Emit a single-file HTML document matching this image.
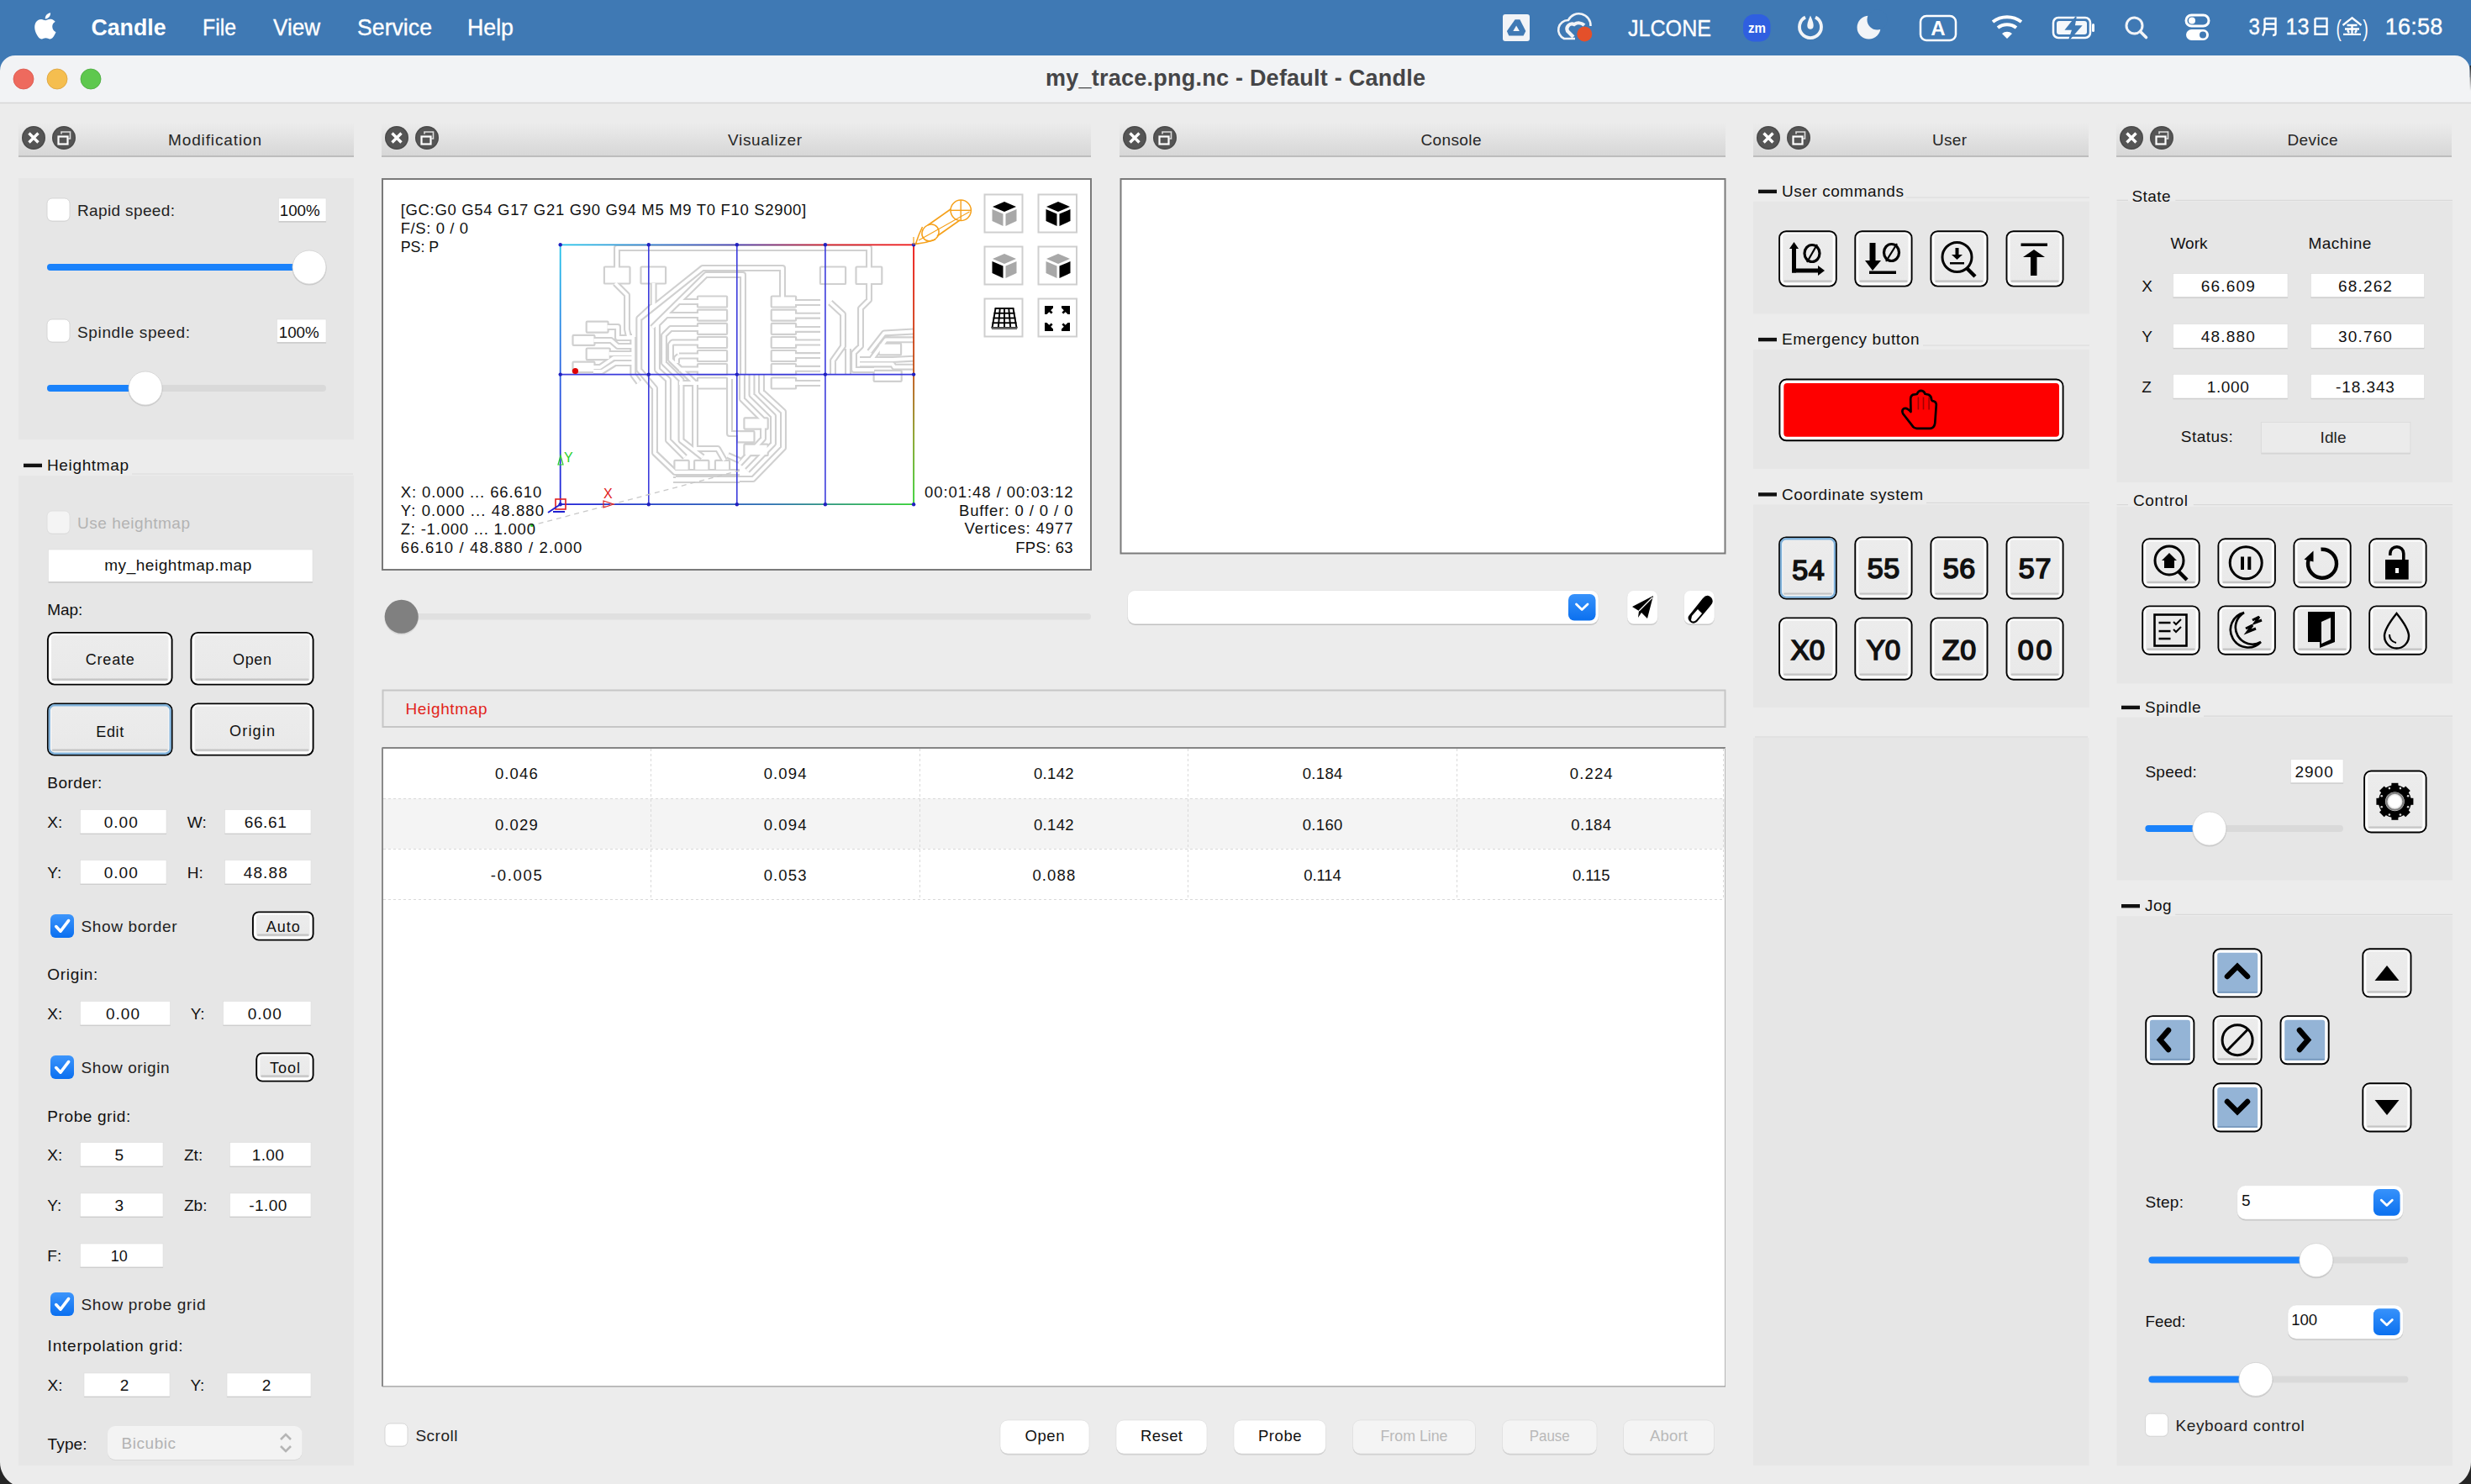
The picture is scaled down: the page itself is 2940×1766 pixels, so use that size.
<!DOCTYPE html>
<html><head><meta charset="utf-8"><title>Candle</title>
<style>
html,body{margin:0;padding:0;width:2940px;height:1766px;overflow:hidden;background:#ececec;}
svg{display:block;font-family:"Liberation Sans", sans-serif;}
</style></head><body>
<svg width="2940" height="1766" viewBox="0 0 2940 1766">
<defs>
<linearGradient id="edge" x1="0" y1="0" x2="0" y2="1"><stop offset="0" stop-color="#222"/><stop offset="1" stop-color="#f2f3f5"/></linearGradient>
<linearGradient id="hdr" x1="0" y1="0" x2="0" y2="1"><stop offset="0" stop-color="#ececec"/><stop offset="1" stop-color="#d6d6d6"/></linearGradient>
<linearGradient id="btn" x1="0" y1="0" x2="0" y2="1"><stop offset="0" stop-color="#ececec"/><stop offset="1" stop-color="#e9e9e9"/></linearGradient>
<linearGradient id="chk" x1="0" y1="0" x2="0" y2="1"><stop offset="0" stop-color="#3d95fb"/><stop offset="1" stop-color="#0a6ff0"/></linearGradient>
<linearGradient id="blue" x1="0" y1="0" x2="0" y2="1"><stop offset="0" stop-color="#3792fb"/><stop offset="1" stop-color="#0b70ef"/></linearGradient>
<linearGradient id="gtop" gradientUnits="userSpaceOnUse" x1="666" y1="0" x2="1087" y2="0"><stop offset="0" stop-color="#22c6ea"/><stop offset="0.5" stop-color="#4a3fb0"/><stop offset="0.75" stop-color="#d0202a"/><stop offset="1" stop-color="#ee1010"/></linearGradient>
<linearGradient id="gleft" gradientUnits="userSpaceOnUse" x1="0" y1="291" x2="0" y2="600"><stop offset="0" stop-color="#22c6ea"/><stop offset="0.5" stop-color="#2a60e0"/><stop offset="1" stop-color="#2020d8"/></linearGradient>
<linearGradient id="gright" gradientUnits="userSpaceOnUse" x1="0" y1="291" x2="0" y2="600"><stop offset="0" stop-color="#ee1010"/><stop offset="0.5" stop-color="#c05010"/><stop offset="0.75" stop-color="#80a020"/><stop offset="1" stop-color="#30d030"/></linearGradient>
<linearGradient id="gbot" gradientUnits="userSpaceOnUse" x1="666" y1="0" x2="1087" y2="0"><stop offset="0" stop-color="#2020d8"/><stop offset="0.6" stop-color="#2a70b0"/><stop offset="1" stop-color="#30d030"/></linearGradient>
</defs>
<rect x="0" y="0" width="2940" height="1766" fill="#ececec" stroke="none" stroke-width="0" rx="0" />
<path d="M0 1740 A30 30 0 0 0 15 1766 L0 1766 Z" fill="#262626" stroke="none" stroke-width="0" />
<rect x="0" y="0" width="2940" height="92" fill="#3f79b4" stroke="none" stroke-width="0" rx="0" />
<path d="M53.5 22.5c1.6-2 2.7-4.6 2.4-7.3-2.3.1-5.1 1.6-6.7 3.5-1.5 1.7-2.8 4.4-2.4 7 2.6.2 5.2-1.3 6.7-3.2zM55.8 26.2c-3.7-.2-6.9 2.1-8.6 2.1-1.8 0-4.5-2-7.4-1.9-3.8.1-7.3 2.2-9.3 5.6-4 6.9-1 17.1 2.9 22.7 1.9 2.8 4.1 5.8 7.1 5.7 2.8-.1 3.9-1.8 7.3-1.8s4.4 1.8 7.4 1.8c3.1-.1 5-2.8 6.9-5.6 2.2-3.2 3.1-6.3 3.1-6.5-.1 0-6-2.3-6.1-9.1 0-5.7 4.7-8.4 4.9-8.6-2.7-3.9-6.8-4.4-8.2-4.4z" fill="#fff" stroke="none" stroke-width="0" transform="translate(21.5,4.7) scale(0.69)"/>
<text x="108.5" y="42.2" font-size="28" fill="#fff" font-weight="bold" text-anchor="start" textLength="89" lengthAdjust="spacingAndGlyphs" >Candle</text>
<text x="241" y="42.2" font-size="28" fill="#fff" font-weight="normal" text-anchor="start" textLength="40" lengthAdjust="spacingAndGlyphs" stroke="#fff" stroke-width="0.35">File</text>
<text x="325" y="42.2" font-size="28" fill="#fff" font-weight="normal" text-anchor="start" textLength="56" lengthAdjust="spacingAndGlyphs" stroke="#fff" stroke-width="0.35">View</text>
<text x="425" y="42.2" font-size="28" fill="#fff" font-weight="normal" text-anchor="start" textLength="89" lengthAdjust="spacingAndGlyphs" stroke="#fff" stroke-width="0.35">Service</text>
<text x="556" y="42.2" font-size="28" fill="#fff" font-weight="normal" text-anchor="start" textLength="55" lengthAdjust="spacingAndGlyphs" stroke="#fff" stroke-width="0.35">Help</text>
<rect x="1788" y="17" width="32" height="32" fill="#f2f4f7" stroke="none" stroke-width="0" rx="3" />
<path d="M1802.6 23.2 L1808.4 23.2 L1815.3 37.1 L1812.6 42.6 L1795.3 42.6 L1792.9 37.1 Z" fill="#3f79b4" stroke="none" stroke-width="0" stroke="#3f79b4" stroke-width="1.6" stroke-linejoin="round"/>
<path d="M1800.3 37.1 L1804.1 30.5 L1807.9 37.1 Z" fill="#f2f4f7" stroke="none" stroke-width="0" />
<path d="M1874 46 L1861 46 A11.5 11.5 0 0 1 1866 24 A14 14 0 0 1 1892.5 31" fill="none" stroke="#f2f4f7" stroke-width="2.6" />
<path d="M1872 44 L1865 37 A6 6 0 0 1 1873 29 A10 10 0 0 1 1885 30" fill="none" stroke="#f2f4f7" stroke-width="4.2" />
<circle cx="1885.3" cy="40.5" r="9" fill="#e4502a" stroke="none" stroke-width="0" />
<text x="1937" y="43" font-size="28" fill="#fff" font-weight="normal" text-anchor="start" textLength="99" lengthAdjust="spacingAndGlyphs" stroke="#fff" stroke-width="0.35">JLCONE</text>
<rect x="2074" y="17" width="32.5" height="32.5" fill="#2f5fe0" stroke="none" stroke-width="0" rx="13" />
<text x="2090.5" y="38.5" font-size="17" fill="#fff" font-weight="bold" text-anchor="middle" textLength="21" lengthAdjust="spacingAndGlyphs" >zm</text>
<path d="M2148 20.5 A13 13 0 1 0 2160 20.5" fill="none" stroke="#f2f4f7" stroke-width="3.8" />
<path d="M2154 18.5 Q2158.5 28 2157.5 32 A3.6 3.6 0 0 1 2150.5 32 Q2149.5 28 2154 18.5 Z" fill="#f2f4f7" stroke="none" stroke-width="0" />
<circle cx="2223.5" cy="32.7" r="13.9" fill="#f2f4f7" stroke="none" stroke-width="0" />
<circle cx="2233.5" cy="23.5" r="12" fill="#3f79b4" stroke="none" stroke-width="0" />
<rect x="2285" y="19" width="42" height="29" fill="none" stroke="#fff" stroke-width="2.5" rx="7" />
<text x="2306" y="42" font-size="24" fill="#fff" font-weight="bold" text-anchor="middle" >A</text>
<path d="M2371 26 a28 28 0 0 1 34 0" fill="none" stroke="#fff" stroke-width="4" />
<path d="M2377 33 a18 18 0 0 1 22 0" fill="none" stroke="#fff" stroke-width="4" />
<path d="M2382 40 L2388 46 L2394 40 a9 9 0 0 0 -12 0 Z" fill="#fff" stroke="none" stroke-width="0" />
<rect x="2443" y="21" width="44" height="24" fill="none" stroke="#fff" stroke-width="2.5" rx="6" />
<rect x="2489" y="28" width="3" height="10" fill="#fff" stroke="none" stroke-width="0" rx="1.5" />
<rect x="2447" y="25" width="36" height="16" fill="#fff" stroke="none" stroke-width="0" rx="3" opacity="0.95"/>
<path d="M2470 20 L2458 35 L2466 35 L2462 47 L2476 31 L2468 31 Z" fill="#3f79b4" stroke="#3f79b4" stroke-width="1.5" />
<circle cx="2539.5" cy="30.5" r="9.5" fill="none" stroke="#f2f4f7" stroke-width="3" />
<line x1="2546.5" y1="37.5" x2="2553.5" y2="44.5" stroke="#f2f4f7" stroke-width="3.6" stroke-linecap="round"/>
<rect x="2601" y="18" width="27" height="13" fill="none" stroke="#fff" stroke-width="3" rx="6.5" />
<circle cx="2608" cy="24.5" r="4" fill="#fff" stroke="none" stroke-width="0" />
<rect x="2601" y="35" width="27" height="13" fill="#fff" stroke="none" stroke-width="0" rx="6.5" />
<circle cx="2621" cy="41.5" r="4" fill="#3f79b4" stroke="none" stroke-width="0" />
<text x="2675.5" y="41.2" font-size="27" fill="#fff" font-weight="normal" text-anchor="start" textLength="13.4" lengthAdjust="spacingAndGlyphs" stroke="#fff" stroke-width="0.35">3</text>
<path d="M2694.5 22 L2694.5 34 Q2694.5 39 2692 42.5 M2694.5 22 L2707.5 22 L2707.5 40 Q2707.5 42 2704 42 M2694.5 28.5 L2707.5 28.5 M2694.5 34.5 L2707.5 34.5" fill="none" stroke="#fff" stroke-width="2.4" />
<text x="2719.4" y="41.2" font-size="27" fill="#fff" font-weight="normal" text-anchor="start" textLength="28" lengthAdjust="spacingAndGlyphs" stroke="#fff" stroke-width="0.35">13</text>
<path d="M2754.5 22 L2768.5 22 L2768.5 42 M2754.5 22 L2754.5 42 M2754.5 31.5 L2768.5 31.5 M2754.5 40.8 L2768.5 40.8" fill="none" stroke="#fff" stroke-width="2.4" />
<text x="2779.5" y="43" font-size="27" fill="#fff" font-weight="normal" text-anchor="start" textLength="6.2" lengthAdjust="spacingAndGlyphs" >(</text>
<path d="M2787.5 30.0 L2798.5 21.3 L2809.5 30.0 M2792.5 30.0 L2804.5 30.0 M2790 34.5 L2807 34.5 M2798.5 30.0 L2798.5 40.5 M2788 40.8 L2809 40.8 M2793 36.0 L2795 39.0 M2804 36.0 L2802 39.0" fill="none" stroke="#fff" stroke-width="2.3" />
<text x="2811.2" y="43" font-size="27" fill="#fff" font-weight="normal" text-anchor="start" textLength="6.5" lengthAdjust="spacingAndGlyphs" >)</text>
<text x="2837.8" y="41.2" font-size="27" fill="#fff" font-weight="normal" text-anchor="start" textLength="68.4" lengthAdjust="spacing" stroke="#fff" stroke-width="0.35">16:58</text>
<path d="M0 84 A18 18 0 0 1 18 66 L2920.7 66 A18 18 0 0 1 2938.7 84 L2938.7 92 L2940 92 L2940 122 L0 122 Z" fill="#f2f3f5" stroke="none" stroke-width="0" />
<rect x="2938.6" y="78" width="1.4" height="30" fill="url(#edge)"/>
<line x1="0" y1="122.5" x2="2940" y2="122.5" stroke="#d6d6d6" stroke-width="1.5" />
<circle cx="28" cy="94" r="12" fill="#ee6a5e" stroke="#d9574c" stroke-width="0.8" />
<circle cx="68" cy="94" r="12" fill="#f5be4f" stroke="#d9a13c" stroke-width="0.8" />
<circle cx="108" cy="94" r="12" fill="#5ec84e" stroke="#4aa83d" stroke-width="0.8" />
<text x="1470" y="102" font-size="27" fill="#454547" font-weight="bold" text-anchor="middle" textLength="452" lengthAdjust="spacing" >my_trace.png.nc - Default - Candle</text>
<rect x="22" y="146" width="399" height="41" fill="url(#hdr)"/>
<rect x="22" y="185" width="399" height="2" fill="#bdbdbd" stroke="none" stroke-width="0" rx="0" />
<circle cx="40" cy="164" r="14" fill="#4a4a4a" stroke="none" stroke-width="0" />
<circle cx="40" cy="164" r="12.5" fill="#555" stroke="none" stroke-width="0" />
<path d="M34.5 158.5 L45.5 169.5 M45.5 158.5 L34.5 169.5" fill="none" stroke="#fff" stroke-width="3.4" />
<circle cx="76" cy="164" r="14" fill="#4a4a4a" stroke="none" stroke-width="0" />
<circle cx="76" cy="164" r="12.5" fill="#555" stroke="none" stroke-width="0" />
<rect x="69.5" y="162.5" width="11" height="9" fill="none" stroke="#fff" stroke-width="2.2" rx="0" />
<path d="M73 159.5 L73 157 L83.5 157 L83.5 165 L81 165" fill="none" stroke="#ddd" stroke-width="1.6" />
<text x="255.5" y="173.3" font-size="19" fill="#262626" font-weight="normal" text-anchor="middle" textLength="111" lengthAdjust="spacing" >Modification</text>
<rect x="454" y="146" width="844" height="41" fill="url(#hdr)"/>
<rect x="454" y="185" width="844" height="2" fill="#bdbdbd" stroke="none" stroke-width="0" rx="0" />
<circle cx="472" cy="164" r="14" fill="#4a4a4a" stroke="none" stroke-width="0" />
<circle cx="472" cy="164" r="12.5" fill="#555" stroke="none" stroke-width="0" />
<path d="M466.5 158.5 L477.5 169.5 M477.5 158.5 L466.5 169.5" fill="none" stroke="#fff" stroke-width="3.4" />
<circle cx="508" cy="164" r="14" fill="#4a4a4a" stroke="none" stroke-width="0" />
<circle cx="508" cy="164" r="12.5" fill="#555" stroke="none" stroke-width="0" />
<rect x="501.5" y="162.5" width="11" height="9" fill="none" stroke="#fff" stroke-width="2.2" rx="0" />
<path d="M505 159.5 L505 157 L515.5 157 L515.5 165 L513 165" fill="none" stroke="#ddd" stroke-width="1.6" />
<text x="910.0" y="173.3" font-size="19" fill="#262626" font-weight="normal" text-anchor="middle" textLength="88" lengthAdjust="spacing" >Visualizer</text>
<rect x="1332" y="146" width="721" height="41" fill="url(#hdr)"/>
<rect x="1332" y="185" width="721" height="2" fill="#bdbdbd" stroke="none" stroke-width="0" rx="0" />
<circle cx="1350" cy="164" r="14" fill="#4a4a4a" stroke="none" stroke-width="0" />
<circle cx="1350" cy="164" r="12.5" fill="#555" stroke="none" stroke-width="0" />
<path d="M1344.5 158.5 L1355.5 169.5 M1355.5 158.5 L1344.5 169.5" fill="none" stroke="#fff" stroke-width="3.4" />
<circle cx="1386" cy="164" r="14" fill="#4a4a4a" stroke="none" stroke-width="0" />
<circle cx="1386" cy="164" r="12.5" fill="#555" stroke="none" stroke-width="0" />
<rect x="1379.5" y="162.5" width="11" height="9" fill="none" stroke="#fff" stroke-width="2.2" rx="0" />
<path d="M1383 159.5 L1383 157 L1393.5 157 L1393.5 165 L1391 165" fill="none" stroke="#ddd" stroke-width="1.6" />
<text x="1726.5" y="173.3" font-size="19" fill="#262626" font-weight="normal" text-anchor="middle" textLength="72" lengthAdjust="spacing" >Console</text>
<rect x="2086" y="146" width="399" height="41" fill="url(#hdr)"/>
<rect x="2086" y="185" width="399" height="2" fill="#bdbdbd" stroke="none" stroke-width="0" rx="0" />
<circle cx="2104" cy="164" r="14" fill="#4a4a4a" stroke="none" stroke-width="0" />
<circle cx="2104" cy="164" r="12.5" fill="#555" stroke="none" stroke-width="0" />
<path d="M2098.5 158.5 L2109.5 169.5 M2109.5 158.5 L2098.5 169.5" fill="none" stroke="#fff" stroke-width="3.4" />
<circle cx="2140" cy="164" r="14" fill="#4a4a4a" stroke="none" stroke-width="0" />
<circle cx="2140" cy="164" r="12.5" fill="#555" stroke="none" stroke-width="0" />
<rect x="2133.5" y="162.5" width="11" height="9" fill="none" stroke="#fff" stroke-width="2.2" rx="0" />
<path d="M2137 159.5 L2137 157 L2147.5 157 L2147.5 165 L2145 165" fill="none" stroke="#ddd" stroke-width="1.6" />
<text x="2319.5" y="173.3" font-size="19" fill="#262626" font-weight="normal" text-anchor="middle" textLength="41" lengthAdjust="spacing" >User</text>
<rect x="2518" y="146" width="399" height="41" fill="url(#hdr)"/>
<rect x="2518" y="185" width="399" height="2" fill="#bdbdbd" stroke="none" stroke-width="0" rx="0" />
<circle cx="2536" cy="164" r="14" fill="#4a4a4a" stroke="none" stroke-width="0" />
<circle cx="2536" cy="164" r="12.5" fill="#555" stroke="none" stroke-width="0" />
<path d="M2530.5 158.5 L2541.5 169.5 M2541.5 158.5 L2530.5 169.5" fill="none" stroke="#fff" stroke-width="3.4" />
<circle cx="2572" cy="164" r="14" fill="#4a4a4a" stroke="none" stroke-width="0" />
<circle cx="2572" cy="164" r="12.5" fill="#555" stroke="none" stroke-width="0" />
<rect x="2565.5" y="162.5" width="11" height="9" fill="none" stroke="#fff" stroke-width="2.2" rx="0" />
<path d="M2569 159.5 L2569 157 L2579.5 157 L2579.5 165 L2577 165" fill="none" stroke="#ddd" stroke-width="1.6" />
<text x="2751.5" y="173.3" font-size="19" fill="#262626" font-weight="normal" text-anchor="middle" textLength="60" lengthAdjust="spacing" >Device</text>
<rect x="22" y="212" width="399" height="311" fill="#e6e6e6" stroke="none" stroke-width="0" rx="0" />
<rect x="56" y="236.8" width="27" height="27" fill="#d0d0d0" stroke="none" stroke-width="0" rx="6" opacity="0.5"/>
<rect x="56" y="236" width="27" height="27" fill="#ffffff" stroke="#cfcfcf" stroke-width="0.8" rx="6" />
<text x="92" y="257" font-size="19" fill="#222" font-weight="normal" text-anchor="start" textLength="116" lengthAdjust="spacing" >Rapid speed:</text>
<rect x="331.5" y="262.5" width="56.5" height="2" fill="#b8b8b8" stroke="none" stroke-width="0" rx="0" />
<rect x="331.5" y="236" width="56.5" height="27.2" fill="#fff" stroke="none" stroke-width="0" rx="0" />
<rect x="331.5" y="236" width="56.5" height="28" fill="none" stroke="#dcdcdc" stroke-width="0.6" rx="0" />
<text x="356.75" y="257" font-size="19" fill="#111" font-weight="normal" text-anchor="middle" textLength="48" lengthAdjust="spacingAndGlyphs" >100%</text>
<rect x="56" y="314.0" width="332" height="8" fill="#d9d9d9" stroke="none" stroke-width="0" rx="4.0" />
<rect x="56" y="314.0" width="312" height="8" fill="#1a82fb" stroke="none" stroke-width="0" rx="4.0" />
<circle cx="368" cy="319" r="20.6" fill="#000" stroke="none" stroke-width="0" opacity="0.12"/>
<circle cx="368" cy="318" r="20" fill="#fff" stroke="#d2d2d2" stroke-width="0.8" />
<rect x="56" y="380.8" width="27" height="27" fill="#d0d0d0" stroke="none" stroke-width="0" rx="6" opacity="0.5"/>
<rect x="56" y="380" width="27" height="27" fill="#ffffff" stroke="#cfcfcf" stroke-width="0.8" rx="6" />
<text x="92" y="401.5" font-size="19" fill="#222" font-weight="normal" text-anchor="start" textLength="134" lengthAdjust="spacing" >Spindle speed:</text>
<rect x="329.5" y="406.5" width="58.5" height="2" fill="#b8b8b8" stroke="none" stroke-width="0" rx="0" />
<rect x="329.5" y="380" width="58.5" height="27.2" fill="#fff" stroke="none" stroke-width="0" rx="0" />
<rect x="329.5" y="380" width="58.5" height="28" fill="none" stroke="#dcdcdc" stroke-width="0.6" rx="0" />
<text x="355.75" y="401.5" font-size="19" fill="#111" font-weight="normal" text-anchor="middle" textLength="48" lengthAdjust="spacingAndGlyphs" >100%</text>
<rect x="56" y="458.0" width="332" height="8" fill="#d9d9d9" stroke="none" stroke-width="0" rx="4.0" />
<rect x="56" y="458.0" width="117" height="8" fill="#1a82fb" stroke="none" stroke-width="0" rx="4.0" />
<circle cx="173" cy="463" r="20.6" fill="#000" stroke="none" stroke-width="0" opacity="0.12"/>
<circle cx="173" cy="462" r="20" fill="#fff" stroke="#d2d2d2" stroke-width="0.8" />
<rect x="22" y="566" width="399" height="1178" fill="#e6e6e6" stroke="none" stroke-width="0" rx="0" />
<rect x="28" y="551.7" width="22" height="4.4" fill="#111" stroke="none" stroke-width="0" rx="0" />
<text x="56" y="560" font-size="19" fill="#111" font-weight="normal" text-anchor="start" textLength="97" lengthAdjust="spacing" >Heightmap</text>
<line x1="157" y1="564" x2="420" y2="564" stroke="#d9d9d9" stroke-width="1.2" />
<rect x="56" y="608.8" width="27" height="27" fill="#d0d0d0" stroke="none" stroke-width="0" rx="6" opacity="0.5"/>
<rect x="56" y="608" width="27" height="27" fill="#f4f4f4" stroke="#dddddd" stroke-width="0.8" rx="6" />
<text x="92" y="628.5" font-size="19" fill="#b3b3b3" font-weight="normal" text-anchor="start" textLength="134" lengthAdjust="spacing" >Use heightmap</text>
<rect x="57.5" y="691.5" width="314.5" height="2" fill="#b8b8b8" stroke="none" stroke-width="0" rx="0" />
<rect x="57.5" y="654" width="314.5" height="38.2" fill="#fff" stroke="none" stroke-width="0" rx="0" />
<rect x="57.5" y="654" width="314.5" height="39" fill="none" stroke="#dcdcdc" stroke-width="0.6" rx="0" />
<text x="211.75" y="679" font-size="19" fill="#111" font-weight="normal" text-anchor="middle" textLength="175" lengthAdjust="spacing" >my_heightmap.map</text>
<text x="56.3" y="732.3" font-size="19" fill="#111" font-weight="normal" text-anchor="start" textLength="42" lengthAdjust="spacing" >Map:</text>
<rect x="56.9" y="752.9" width="147.7" height="61.7" fill="#ffffff" stroke="#000" stroke-width="1.9" rx="8" />
<rect x="61" y="756" width="139.5" height="54.5" rx="3" fill="url(#btn)"/>
<rect x="62" y="807.5" width="137.5" height="2.2" fill="#c4c4c4" stroke="none" stroke-width="0" rx="1" />
<text x="130.75" y="790.8" font-size="18" fill="#111" font-weight="normal" text-anchor="middle" textLength="58" lengthAdjust="spacing" >Create</text>
<rect x="227.4" y="752.9" width="145.2" height="61.7" fill="#ffffff" stroke="#000" stroke-width="1.9" rx="8" />
<rect x="231.5" y="756" width="137.0" height="54.5" rx="3" fill="url(#btn)"/>
<rect x="232.5" y="807.5" width="135.0" height="2.2" fill="#c4c4c4" stroke="none" stroke-width="0" rx="1" />
<text x="300.0" y="791" font-size="18" fill="#111" font-weight="normal" text-anchor="middle" textLength="46" lengthAdjust="spacing" >Open</text>
<rect x="56.9" y="837.4" width="147.7" height="61.2" fill="#ffffff" stroke="#000" stroke-width="1.9" rx="8" />
<rect x="61" y="840.5" width="139.5" height="54.0" rx="3" fill="url(#btn)"/>
<rect x="62" y="891.5" width="137.5" height="2.2" fill="#c4c4c4" stroke="none" stroke-width="0" rx="1" />
<rect x="58.8" y="839.3" width="143.9" height="57.4" fill="none" stroke="#7fb0d8" stroke-width="2.4" rx="6" />
<text x="130.75" y="876.7" font-size="18" fill="#111" font-weight="normal" text-anchor="middle" textLength="33" lengthAdjust="spacing" >Edit</text>
<rect x="227.4" y="837.4" width="145.2" height="61.2" fill="#ffffff" stroke="#000" stroke-width="1.9" rx="8" />
<rect x="231.5" y="840.5" width="137.0" height="54.0" rx="3" fill="url(#btn)"/>
<rect x="232.5" y="891.5" width="135.0" height="2.2" fill="#c4c4c4" stroke="none" stroke-width="0" rx="1" />
<text x="300.0" y="876" font-size="18" fill="#111" font-weight="normal" text-anchor="middle" textLength="54" lengthAdjust="spacing" >Origin</text>
<text x="56.3" y="938.4" font-size="19" fill="#111" font-weight="normal" text-anchor="start" textLength="65" lengthAdjust="spacing" >Border:</text>
<text x="56.3" y="985" font-size="19" fill="#111" font-weight="normal" text-anchor="start" >X:</text>
<rect x="95.5" y="991.0" width="102.5" height="2" fill="#b8b8b8" stroke="none" stroke-width="0" rx="0" />
<rect x="95.5" y="963.5" width="102.5" height="28.2" fill="#fff" stroke="none" stroke-width="0" rx="0" />
<rect x="95.5" y="963.5" width="102.5" height="29.0" fill="none" stroke="#dcdcdc" stroke-width="0.6" rx="0" />
<text x="143.75" y="985" font-size="19" fill="#111" font-weight="normal" text-anchor="middle" textLength="40" lengthAdjust="spacing" >0.00</text>
<text x="222.8" y="985" font-size="19" fill="#111" font-weight="normal" text-anchor="start" >W:</text>
<rect x="267.5" y="991.0" width="102.5" height="2" fill="#b8b8b8" stroke="none" stroke-width="0" rx="0" />
<rect x="267.5" y="963.5" width="102.5" height="28.2" fill="#fff" stroke="none" stroke-width="0" rx="0" />
<rect x="267.5" y="963.5" width="102.5" height="29.0" fill="none" stroke="#dcdcdc" stroke-width="0.6" rx="0" />
<text x="315.75" y="985" font-size="19" fill="#111" font-weight="normal" text-anchor="middle" textLength="50" lengthAdjust="spacing" >66.61</text>
<text x="56.3" y="1045.2" font-size="19" fill="#111" font-weight="normal" text-anchor="start" >Y:</text>
<rect x="95.5" y="1051.0" width="102.5" height="2" fill="#b8b8b8" stroke="none" stroke-width="0" rx="0" />
<rect x="95.5" y="1023.5" width="102.5" height="28.2" fill="#fff" stroke="none" stroke-width="0" rx="0" />
<rect x="95.5" y="1023.5" width="102.5" height="29.0" fill="none" stroke="#dcdcdc" stroke-width="0.6" rx="0" />
<text x="143.75" y="1045.2" font-size="19" fill="#111" font-weight="normal" text-anchor="middle" textLength="40" lengthAdjust="spacing" >0.00</text>
<text x="222.8" y="1045.2" font-size="19" fill="#111" font-weight="normal" text-anchor="start" >H:</text>
<rect x="267.5" y="1051.0" width="102.5" height="2" fill="#b8b8b8" stroke="none" stroke-width="0" rx="0" />
<rect x="267.5" y="1023.5" width="102.5" height="28.2" fill="#fff" stroke="none" stroke-width="0" rx="0" />
<rect x="267.5" y="1023.5" width="102.5" height="29.0" fill="none" stroke="#dcdcdc" stroke-width="0.6" rx="0" />
<text x="315.75" y="1045.2" font-size="19" fill="#111" font-weight="normal" text-anchor="middle" textLength="52" lengthAdjust="spacing" >48.88</text>
<rect x="60" y="1088" width="28" height="28" rx="6" fill="url(#chk)"/>
<path d="M66.72 1102.56 L72.03999999999999 1108.16 L81.56 1095.56" fill="none" stroke="#fff" stroke-width="3.6" stroke-linecap="round" stroke-linejoin="round"/>
<text x="96.5" y="1109.2" font-size="19" fill="#222" font-weight="normal" text-anchor="start" textLength="114" lengthAdjust="spacing" >Show border</text>
<rect x="300.9" y="1085.4" width="71.7" height="33.2" fill="#ffffff" stroke="#000" stroke-width="1.9" rx="7" />
<rect x="305" y="1088.5" width="63.5" height="26.0" rx="3" fill="url(#btn)"/>
<rect x="306" y="1111.5" width="61.5" height="2.2" fill="#c4c4c4" stroke="none" stroke-width="0" rx="1" />
<text x="336.75" y="1108.7" font-size="18" fill="#111" font-weight="normal" text-anchor="middle" textLength="40" lengthAdjust="spacing" >Auto</text>
<text x="56.3" y="1166.4" font-size="19" fill="#111" font-weight="normal" text-anchor="start" textLength="60" lengthAdjust="spacing" >Origin:</text>
<text x="56.3" y="1212.5" font-size="19" fill="#111" font-weight="normal" text-anchor="start" >X:</text>
<rect x="95.5" y="1219.0" width="107.0" height="2" fill="#b8b8b8" stroke="none" stroke-width="0" rx="0" />
<rect x="95.5" y="1191.5" width="107.0" height="28.2" fill="#fff" stroke="none" stroke-width="0" rx="0" />
<rect x="95.5" y="1191.5" width="107.0" height="29.0" fill="none" stroke="#dcdcdc" stroke-width="0.6" rx="0" />
<text x="146.0" y="1212.5" font-size="19" fill="#111" font-weight="normal" text-anchor="middle" textLength="40" lengthAdjust="spacing" >0.00</text>
<text x="226.7" y="1212.5" font-size="19" fill="#111" font-weight="normal" text-anchor="start" >Y:</text>
<rect x="265.5" y="1219.0" width="104.5" height="2" fill="#b8b8b8" stroke="none" stroke-width="0" rx="0" />
<rect x="265.5" y="1191.5" width="104.5" height="28.2" fill="#fff" stroke="none" stroke-width="0" rx="0" />
<rect x="265.5" y="1191.5" width="104.5" height="29.0" fill="none" stroke="#dcdcdc" stroke-width="0.6" rx="0" />
<text x="314.75" y="1212.5" font-size="19" fill="#111" font-weight="normal" text-anchor="middle" textLength="40" lengthAdjust="spacing" >0.00</text>
<rect x="60" y="1256" width="28" height="28" rx="6" fill="url(#chk)"/>
<path d="M66.72 1270.56 L72.03999999999999 1276.16 L81.56 1263.56" fill="none" stroke="#fff" stroke-width="3.6" stroke-linecap="round" stroke-linejoin="round"/>
<text x="96.5" y="1277" font-size="19" fill="#222" font-weight="normal" text-anchor="start" textLength="105" lengthAdjust="spacing" >Show origin</text>
<rect x="305.2" y="1253.4" width="67.39999999999999" height="33.2" fill="#ffffff" stroke="#000" stroke-width="1.9" rx="7" />
<rect x="309.3" y="1256.5" width="59.19999999999999" height="26.0" rx="3" fill="url(#btn)"/>
<rect x="310.3" y="1279.5" width="57.19999999999999" height="2.2" fill="#c4c4c4" stroke="none" stroke-width="0" rx="1" />
<text x="338.9" y="1277" font-size="18" fill="#111" font-weight="normal" text-anchor="middle" textLength="36" lengthAdjust="spacing" >Tool</text>
<text x="56.3" y="1334.5" font-size="19" fill="#111" font-weight="normal" text-anchor="start" textLength="99" lengthAdjust="spacing" >Probe grid:</text>
<text x="56.3" y="1381" font-size="19" fill="#111" font-weight="normal" text-anchor="start" >X:</text>
<rect x="95.5" y="1387.0" width="98.5" height="2" fill="#b8b8b8" stroke="none" stroke-width="0" rx="0" />
<rect x="95.5" y="1359.5" width="98.5" height="28.2" fill="#fff" stroke="none" stroke-width="0" rx="0" />
<rect x="95.5" y="1359.5" width="98.5" height="29.0" fill="none" stroke="#dcdcdc" stroke-width="0.6" rx="0" />
<text x="141.75" y="1381" font-size="19" fill="#111" font-weight="normal" text-anchor="middle" >5</text>
<text x="219" y="1381" font-size="19" fill="#111" font-weight="normal" text-anchor="start" >Zt:</text>
<rect x="273.5" y="1387.0" width="96.5" height="2" fill="#b8b8b8" stroke="none" stroke-width="0" rx="0" />
<rect x="273.5" y="1359.5" width="96.5" height="28.2" fill="#fff" stroke="none" stroke-width="0" rx="0" />
<rect x="273.5" y="1359.5" width="96.5" height="29.0" fill="none" stroke="#dcdcdc" stroke-width="0.6" rx="0" />
<text x="318.75" y="1381" font-size="19" fill="#111" font-weight="normal" text-anchor="middle" textLength="38" lengthAdjust="spacing" >1.00</text>
<text x="56.3" y="1441" font-size="19" fill="#111" font-weight="normal" text-anchor="start" >Y:</text>
<rect x="95.5" y="1447.0" width="98.5" height="2" fill="#b8b8b8" stroke="none" stroke-width="0" rx="0" />
<rect x="95.5" y="1420" width="98.5" height="27.7" fill="#fff" stroke="none" stroke-width="0" rx="0" />
<rect x="95.5" y="1420" width="98.5" height="28.5" fill="none" stroke="#dcdcdc" stroke-width="0.6" rx="0" />
<text x="141.75" y="1441" font-size="19" fill="#111" font-weight="normal" text-anchor="middle" >3</text>
<text x="219" y="1441" font-size="19" fill="#111" font-weight="normal" text-anchor="start" >Zb:</text>
<rect x="273.5" y="1447.0" width="96.5" height="2" fill="#b8b8b8" stroke="none" stroke-width="0" rx="0" />
<rect x="273.5" y="1420" width="96.5" height="27.7" fill="#fff" stroke="none" stroke-width="0" rx="0" />
<rect x="273.5" y="1420" width="96.5" height="28.5" fill="none" stroke="#dcdcdc" stroke-width="0.6" rx="0" />
<text x="318.75" y="1441" font-size="19" fill="#111" font-weight="normal" text-anchor="middle" textLength="45" lengthAdjust="spacing" >-1.00</text>
<text x="56.3" y="1501" font-size="19" fill="#111" font-weight="normal" text-anchor="start" >F:</text>
<rect x="95.5" y="1507.0" width="98.5" height="2" fill="#b8b8b8" stroke="none" stroke-width="0" rx="0" />
<rect x="95.5" y="1480" width="98.5" height="27.7" fill="#fff" stroke="none" stroke-width="0" rx="0" />
<rect x="95.5" y="1480" width="98.5" height="28.5" fill="none" stroke="#dcdcdc" stroke-width="0.6" rx="0" />
<text x="141.75" y="1501" font-size="19" fill="#111" font-weight="normal" text-anchor="middle" textLength="20" lengthAdjust="spacingAndGlyphs" >10</text>
<rect x="60" y="1538" width="28" height="28" rx="6" fill="url(#chk)"/>
<path d="M66.72 1552.56 L72.03999999999999 1558.16 L81.56 1545.56" fill="none" stroke="#fff" stroke-width="3.6" stroke-linecap="round" stroke-linejoin="round"/>
<text x="96.5" y="1559.1" font-size="19" fill="#222" font-weight="normal" text-anchor="start" textLength="148" lengthAdjust="spacing" >Show probe grid</text>
<text x="56.6" y="1608" font-size="19" fill="#111" font-weight="normal" text-anchor="start" textLength="161" lengthAdjust="spacing" >Interpolation grid:</text>
<text x="56.6" y="1654.6" font-size="19" fill="#111" font-weight="normal" text-anchor="start" >X:</text>
<rect x="100" y="1661.0" width="102" height="2" fill="#b8b8b8" stroke="none" stroke-width="0" rx="0" />
<rect x="100" y="1634" width="102" height="27.7" fill="#fff" stroke="none" stroke-width="0" rx="0" />
<rect x="100" y="1634" width="102" height="28.5" fill="none" stroke="#dcdcdc" stroke-width="0.6" rx="0" />
<text x="148.0" y="1654.6" font-size="19" fill="#111" font-weight="normal" text-anchor="middle" >2</text>
<text x="226.5" y="1654.6" font-size="19" fill="#111" font-weight="normal" text-anchor="start" >Y:</text>
<rect x="270" y="1661.0" width="100" height="2" fill="#b8b8b8" stroke="none" stroke-width="0" rx="0" />
<rect x="270" y="1634" width="100" height="27.7" fill="#fff" stroke="none" stroke-width="0" rx="0" />
<rect x="270" y="1634" width="100" height="28.5" fill="none" stroke="#dcdcdc" stroke-width="0.6" rx="0" />
<text x="317.0" y="1654.6" font-size="19" fill="#111" font-weight="normal" text-anchor="middle" >2</text>
<text x="56.6" y="1724.6" font-size="19" fill="#111" font-weight="normal" text-anchor="start" textLength="47" lengthAdjust="spacing" >Type:</text>
<rect x="128" y="1698" width="231.5" height="40" fill="#cfcfcf" stroke="none" stroke-width="0" rx="9" opacity="0.6"/>
<rect x="128" y="1697" width="231.5" height="40" fill="#f3f3f3" stroke="none" stroke-width="0" rx="9" />
<text x="144.6" y="1723.8" font-size="19" fill="#b2b2b2" font-weight="normal" text-anchor="start" textLength="64.5" lengthAdjust="spacing" >Bicubic</text>
<path d="M334 1713 L340 1707 L346 1713 M334 1721 L340 1727 L346 1721" fill="none" stroke="#b5b5b5" stroke-width="2.6" />
<rect x="455" y="213" width="843" height="465" fill="#fff" stroke="#7a7a7a" stroke-width="2" rx="0" />
<g fill="none" stroke-linejoin="round">
<path d="M734.0 319.0 L734.0 295.0 L1034.0 295.0 L1034.0 319.0 M732.0 337.0 L746.0 351.0 L746.0 392.0 L748.0 401.0 L752.0 401.0 M777.6 337.0 L777.6 363.0 L760.3 379.0 L760.3 440.0 L779.0 462.0 L779.0 539.0 L803.0 562.0 L880.0 562.0 M762.0 378.0 L836.0 319.0 L931.0 319.0 L931.0 357.0 M776.0 390.0 L840.0 327.0 L884.0 327.0 L884.0 446.0 M808.0 375.0 L793.0 375.0 L782.0 386.0 L782.0 440.0 L795.0 452.0 L795.0 524.0 L815.0 544.0 M808.0 391.0 L798.0 391.0 L790.0 399.0 L790.0 432.0 L810.5 452.0 L810.5 524.0 L836.0 544.0 M808.0 407.5 L800.0 407.5 L798.0 410.0 L798.0 428.0 L827.0 456.0 L827.0 534.0 L854.0 534.0 L862.0 548.0 M808.0 423.5 L805.0 426.0 L805.0 432.0 M987.8 360.0 L1003.0 374.0 L1003.0 412.0 L991.0 429.0 L991.0 446.0 M1034.0 337.0 L1034.0 357.0 L1024.0 367.0 L1024.0 412.0 L1016.0 420.0 L1016.0 440.0 L1040.0 440.0 M1009.0 415.0 L1009.0 446.0 M1034.6 418.8 L1052.0 396.4 L1087.0 394.5 M1037.0 427.3 L1054.0 404.3 L1087.0 404.3 M1023.0 428.0 L1062.0 428.0 L1087.0 426.7 M1023.0 433.4 L1062.0 433.4 L1064.0 436.7 L1087.0 436.7 M722.5 389.0 L735.0 389.0 L735.0 402.0 L752.0 402.0 M706.4 405.0 L727.0 405.0 L735.0 412.0 L752.0 412.0 M724.7 421.0 L752.0 421.0 M706.0 437.0 L714.0 437.0 L730.0 426.0 L752.0 426.0 M706.0 442.0 L716.0 442.0 L732.0 432.0 L752.0 432.0 M753.3 401.0 L753.3 446.0 L760.0 455.0 M906.0 446.0 L906.0 466.0 L932.0 490.0 L932.0 533.0 L896.0 570.0 L804.0 570.0 M894.5 446.0 L894.5 470.0 L920.0 495.0 L920.0 528.0 L889.0 560.0 M883.0 446.0 L883.0 475.0 L908.0 500.0 L908.0 522.0 L880.0 552.0 M868.0 451.0 L868.0 516.0 L880.0 516.0 M944.0 360.0 L976.0 360.0 M944.0 375.7 L976.0 375.7 M944.0 391.9 L976.0 391.9 M944.0 407.5 L976.0 407.5 M944.0 423.1 L976.0 423.1 M944.0 438.8 L976.0 438.8 M944.0 456.0 L976.0 456.0 M808.0 359.0 L831.0 359.0 M808.0 375.0 L831.0 375.0 M808.0 391.0 L831.0 391.0 M808.0 407.5 L831.0 407.5 M808.0 423.5 L831.0 423.5 M808.0 439.5 L831.0 439.5 M808.0 456.0 L831.0 456.0 M801.0 571.0 L880.0 571.0 M866.0 542.0 L880.0 548.0" fill="none" stroke="#d0d0d0" stroke-width="8" />
<path d="M720 318.6 H748.4 V336.4 H720 Z M763.6 318.6 H791 V336.4 H763.6 Z M977 318.6 H1005 V336.9 H977 Z M1019.6 318.6 H1048.2 V336.9 H1019.6 Z M698.8 383.8 H722.5 V394.6 H698.8 Z M682.6 400 H706.4 V409.7 H682.6 Z M698.8 415.6 H724.7 V427 H698.8 Z M682.6 431.8 H706.4 V442 H682.6 Z M1046.7 409.7 H1071 V421.2 H1046.7 Z M1040.7 441.9 H1071.6 V452.8 H1040.7 Z M886.5 498.5 H912.6 V509.6 H886.5 Z M878 514.2 H896.4 V525.3 H878 Z M886.5 529.8 H912.6 V541 H886.5 Z M803.5 549 H818.6 V558.7 H803.5 Z M827.2 549 H842.3 V558.7 H827.2 Z M852 549 H867 V558.7 H852 Z M831 353.6 H864 V364.4 H831 Z M918.8 353.6 H946 V364.4 H918.8 Z M831 369.8 H864 V380.59999999999997 H831 Z M918.8 369.8 H946 V380.59999999999997 H918.8 Z M831 385.90000000000003 H864 V396.7 H831 Z M918.8 385.90000000000003 H946 V396.7 H918.8 Z M831 402.1 H864 V412.9 H831 Z M918.8 402.1 H946 V412.9 H918.8 Z M831 418.1 H864 V428.9 H831 Z M918.8 418.1 H946 V428.9 H918.8 Z M831 434.1 H864 V444.9 H831 Z M918.8 434.1 H946 V444.9 H918.8 Z M831 450.6 H864 V461.4 H831 Z M918.8 450.6 H946 V461.4 H918.8 Z" fill="#d0d0d0" stroke="#d0d0d0" stroke-width="4.4" stroke-linejoin="round"/>
<path d="M734.0 319.0 L734.0 295.0 L1034.0 295.0 L1034.0 319.0 M732.0 337.0 L746.0 351.0 L746.0 392.0 L748.0 401.0 L752.0 401.0 M777.6 337.0 L777.6 363.0 L760.3 379.0 L760.3 440.0 L779.0 462.0 L779.0 539.0 L803.0 562.0 L880.0 562.0 M762.0 378.0 L836.0 319.0 L931.0 319.0 L931.0 357.0 M776.0 390.0 L840.0 327.0 L884.0 327.0 L884.0 446.0 M808.0 375.0 L793.0 375.0 L782.0 386.0 L782.0 440.0 L795.0 452.0 L795.0 524.0 L815.0 544.0 M808.0 391.0 L798.0 391.0 L790.0 399.0 L790.0 432.0 L810.5 452.0 L810.5 524.0 L836.0 544.0 M808.0 407.5 L800.0 407.5 L798.0 410.0 L798.0 428.0 L827.0 456.0 L827.0 534.0 L854.0 534.0 L862.0 548.0 M808.0 423.5 L805.0 426.0 L805.0 432.0 M987.8 360.0 L1003.0 374.0 L1003.0 412.0 L991.0 429.0 L991.0 446.0 M1034.0 337.0 L1034.0 357.0 L1024.0 367.0 L1024.0 412.0 L1016.0 420.0 L1016.0 440.0 L1040.0 440.0 M1009.0 415.0 L1009.0 446.0 M1034.6 418.8 L1052.0 396.4 L1087.0 394.5 M1037.0 427.3 L1054.0 404.3 L1087.0 404.3 M1023.0 428.0 L1062.0 428.0 L1087.0 426.7 M1023.0 433.4 L1062.0 433.4 L1064.0 436.7 L1087.0 436.7 M722.5 389.0 L735.0 389.0 L735.0 402.0 L752.0 402.0 M706.4 405.0 L727.0 405.0 L735.0 412.0 L752.0 412.0 M724.7 421.0 L752.0 421.0 M706.0 437.0 L714.0 437.0 L730.0 426.0 L752.0 426.0 M706.0 442.0 L716.0 442.0 L732.0 432.0 L752.0 432.0 M753.3 401.0 L753.3 446.0 L760.0 455.0 M906.0 446.0 L906.0 466.0 L932.0 490.0 L932.0 533.0 L896.0 570.0 L804.0 570.0 M894.5 446.0 L894.5 470.0 L920.0 495.0 L920.0 528.0 L889.0 560.0 M883.0 446.0 L883.0 475.0 L908.0 500.0 L908.0 522.0 L880.0 552.0 M868.0 451.0 L868.0 516.0 L880.0 516.0 M944.0 360.0 L976.0 360.0 M944.0 375.7 L976.0 375.7 M944.0 391.9 L976.0 391.9 M944.0 407.5 L976.0 407.5 M944.0 423.1 L976.0 423.1 M944.0 438.8 L976.0 438.8 M944.0 456.0 L976.0 456.0 M808.0 359.0 L831.0 359.0 M808.0 375.0 L831.0 375.0 M808.0 391.0 L831.0 391.0 M808.0 407.5 L831.0 407.5 M808.0 423.5 L831.0 423.5 M808.0 439.5 L831.0 439.5 M808.0 456.0 L831.0 456.0 M801.0 571.0 L880.0 571.0 M866.0 542.0 L880.0 548.0" fill="none" stroke="#fff" stroke-width="3.8" />
<path d="M720 318.6 H748.4 V336.4 H720 Z M763.6 318.6 H791 V336.4 H763.6 Z M977 318.6 H1005 V336.9 H977 Z M1019.6 318.6 H1048.2 V336.9 H1019.6 Z M698.8 383.8 H722.5 V394.6 H698.8 Z M682.6 400 H706.4 V409.7 H682.6 Z M698.8 415.6 H724.7 V427 H698.8 Z M682.6 431.8 H706.4 V442 H682.6 Z M1046.7 409.7 H1071 V421.2 H1046.7 Z M1040.7 441.9 H1071.6 V452.8 H1040.7 Z M886.5 498.5 H912.6 V509.6 H886.5 Z M878 514.2 H896.4 V525.3 H878 Z M886.5 529.8 H912.6 V541 H886.5 Z M803.5 549 H818.6 V558.7 H803.5 Z M827.2 549 H842.3 V558.7 H827.2 Z M852 549 H867 V558.7 H852 Z M831 353.6 H864 V364.4 H831 Z M918.8 353.6 H946 V364.4 H918.8 Z M831 369.8 H864 V380.59999999999997 H831 Z M918.8 369.8 H946 V380.59999999999997 H918.8 Z M831 385.90000000000003 H864 V396.7 H831 Z M918.8 385.90000000000003 H946 V396.7 H918.8 Z M831 402.1 H864 V412.9 H831 Z M918.8 402.1 H946 V412.9 H918.8 Z M831 418.1 H864 V428.9 H831 Z M918.8 418.1 H946 V428.9 H918.8 Z M831 434.1 H864 V444.9 H831 Z M918.8 434.1 H946 V444.9 H918.8 Z M831 450.6 H864 V461.4 H831 Z M918.8 450.6 H946 V461.4 H918.8 Z" fill="#fff" stroke="none" stroke-width="0" />
</g>
<line x1="771.8" y1="291.3" x2="771.8" y2="600.2" stroke="#3b3bdc" stroke-width="1.6" />
<line x1="876.8" y1="291.3" x2="876.8" y2="600.2" stroke="#3b3bdc" stroke-width="1.6" />
<line x1="981.9" y1="291.3" x2="981.9" y2="600.2" stroke="#3b3bdc" stroke-width="1.6" />
<line x1="666.7" y1="445.6" x2="1087.1" y2="445.6" stroke="#3b3bdc" stroke-width="1.6" />
<line x1="666.7" y1="291.3" x2="1087.1" y2="291.3" stroke="url(#gtop)" stroke-width="1.8"/>
<line x1="666.7" y1="291.3" x2="666.7" y2="600.2" stroke="url(#gleft)" stroke-width="1.8"/>
<line x1="1087.1" y1="291.3" x2="1087.1" y2="600.2" stroke="url(#gright)" stroke-width="1.8"/>
<line x1="666.7" y1="600.2" x2="1087.1" y2="600.2" stroke="url(#gbot)" stroke-width="1.8"/>
<circle cx="666.7" cy="291.3" r="2.2" fill="#2020c0" stroke="none" stroke-width="0" />
<circle cx="666.7" cy="445.6" r="2.2" fill="#2020c0" stroke="none" stroke-width="0" />
<circle cx="666.7" cy="600.2" r="2.2" fill="#2020c0" stroke="none" stroke-width="0" />
<circle cx="771.8" cy="291.3" r="2.2" fill="#2020c0" stroke="none" stroke-width="0" />
<circle cx="771.8" cy="445.6" r="2.2" fill="#2020c0" stroke="none" stroke-width="0" />
<circle cx="771.8" cy="600.2" r="2.2" fill="#2020c0" stroke="none" stroke-width="0" />
<circle cx="876.8" cy="291.3" r="2.2" fill="#2020c0" stroke="none" stroke-width="0" />
<circle cx="876.8" cy="445.6" r="2.2" fill="#2020c0" stroke="none" stroke-width="0" />
<circle cx="876.8" cy="600.2" r="2.2" fill="#2020c0" stroke="none" stroke-width="0" />
<circle cx="981.9" cy="291.3" r="2.2" fill="#2020c0" stroke="none" stroke-width="0" />
<circle cx="981.9" cy="445.6" r="2.2" fill="#2020c0" stroke="none" stroke-width="0" />
<circle cx="981.9" cy="600.2" r="2.2" fill="#2020c0" stroke="none" stroke-width="0" />
<circle cx="1087.1" cy="291.3" r="2.2" fill="#2020c0" stroke="none" stroke-width="0" />
<circle cx="1087.1" cy="445.6" r="2.2" fill="#2020c0" stroke="none" stroke-width="0" />
<circle cx="1087.1" cy="600.2" r="2.2" fill="#2020c0" stroke="none" stroke-width="0" />
<circle cx="684.5" cy="441.5" r="3.6" fill="#e00000" stroke="none" stroke-width="0" />
<line x1="630" y1="626" x2="880" y2="560" stroke="#c8c8c8" stroke-width="1.3" stroke-dasharray="6 5"/>
<path d="M664 553 L667 542 L670 553 Z" fill="none" stroke="#2bd12b" stroke-width="1.2" />
<text x="671" y="550" font-size="16" fill="#2bd12b" font-weight="normal" text-anchor="start" >Y</text>
<text x="718" y="593" font-size="16" fill="#e02020" font-weight="normal" text-anchor="start" >X</text>
<path d="M718 596 L730 600 L718 604 Z" fill="none" stroke="#e02020" stroke-width="1.2" />
<rect x="661" y="594" width="12" height="12" fill="none" stroke="#e02020" stroke-width="1.6" rx="0" />
<line x1="667" y1="600" x2="652" y2="610" stroke="#2020d0" stroke-width="2" />
<line x1="658" y1="609" x2="672" y2="609" stroke="#2020d0" stroke-width="2" />
<circle cx="633" cy="625" r="2" fill="#2bd12b" stroke="none" stroke-width="0" />
<circle cx="1143.2" cy="250.3" r="12.2" fill="none" stroke="#f5a01a" stroke-width="1.5" />
<line x1="1131" y1="250.3" x2="1155.4" y2="250.3" stroke="#f5a01a" stroke-width="1.4" />
<line x1="1143.2" y1="238" x2="1143.2" y2="262.5" stroke="#f5a01a" stroke-width="1.4" />
<ellipse cx="1107" cy="277" rx="10.5" ry="9.5" transform="rotate(-40 1107 277)" fill="none" stroke="#f5a01a" stroke-width="1.5"/>
<line x1="1131" y1="249" x2="1104" y2="268" stroke="#f5a01a" stroke-width="1.7" />
<line x1="1142" y1="262" x2="1115" y2="281" stroke="#f5a01a" stroke-width="1.7" />
<path d="M1097.5 270 Q1093 279 1089.4 290.4 Q1102 289 1113 285" fill="none" stroke="#f5a01a" stroke-width="1.6" />
<line x1="1093" y1="286" x2="1153.5" y2="252" stroke="#f5a01a" stroke-width="1.1" />
<line x1="1087" y1="291" x2="1087" y2="282" stroke="#f5a01a" stroke-width="1.2" />
<rect x="1171.5" y="231.5" width="45.0" height="45.0" fill="#fff" stroke="#cfcfcf" stroke-width="2" rx="0" />
<rect x="1235.5" y="231.5" width="45.5" height="45.0" fill="#fff" stroke="#cfcfcf" stroke-width="2" rx="0" />
<rect x="1171.5" y="293.5" width="45.0" height="45.0" fill="#fff" stroke="#cfcfcf" stroke-width="2" rx="0" />
<rect x="1235.5" y="293.5" width="45.5" height="45.0" fill="#fff" stroke="#cfcfcf" stroke-width="2" rx="0" />
<rect x="1171.5" y="355.5" width="45.0" height="45.0" fill="#fff" stroke="#cfcfcf" stroke-width="2" rx="0" />
<rect x="1235.5" y="355.5" width="45.5" height="45.0" fill="#fff" stroke="#cfcfcf" stroke-width="2" rx="0" />
<path d="M1181 246 L1195 240 L1209 246 L1195 252 Z" fill="#000" stroke="none" stroke-width="0" />
<path d="M1180.5 249 L1193.5 254.5 L1193.5 269 L1180.5 263 Z" fill="#a8a8a8" stroke="none" stroke-width="0" />
<path d="M1196.5 254.5 L1209.5 249 L1209.5 263 L1196.5 269 Z" fill="#a8a8a8" stroke="none" stroke-width="0" />
<path d="M1245 246 L1259 240 L1273 246 L1259 252 Z" fill="#000" stroke="none" stroke-width="0" />
<path d="M1244.5 249 L1257.5 254.5 L1257.5 269 L1244.5 263 Z" fill="#000" stroke="none" stroke-width="0" />
<path d="M1260.5 254.5 L1273.5 249 L1273.5 263 L1260.5 269 Z" fill="#000" stroke="none" stroke-width="0" />
<path d="M1181 308 L1195 302 L1209 308 L1195 314 Z" fill="#a8a8a8" stroke="none" stroke-width="0" />
<path d="M1180.5 311 L1193.5 316.5 L1193.5 331 L1180.5 325 Z" fill="#000" stroke="none" stroke-width="0" />
<path d="M1196.5 316.5 L1209.5 311 L1209.5 325 L1196.5 331 Z" fill="#a8a8a8" stroke="none" stroke-width="0" />
<path d="M1245 308 L1259 302 L1273 308 L1259 314 Z" fill="#a8a8a8" stroke="none" stroke-width="0" />
<path d="M1244.5 311 L1257.5 316.5 L1257.5 331 L1244.5 325 Z" fill="#a8a8a8" stroke="none" stroke-width="0" />
<path d="M1260.5 316.5 L1273.5 311 L1273.5 325 L1260.5 331 Z" fill="#000" stroke="none" stroke-width="0" />
<line x1="1184.5" y1="367" x2="1180.5" y2="390" stroke="#000" stroke-width="1.9" />
<line x1="1189.75" y1="367" x2="1187.75" y2="390" stroke="#000" stroke-width="1.9" />
<line x1="1195.0" y1="367" x2="1195.0" y2="390" stroke="#000" stroke-width="1.9" />
<line x1="1200.25" y1="367" x2="1202.25" y2="390" stroke="#000" stroke-width="1.9" />
<line x1="1205.5" y1="367" x2="1209.5" y2="390" stroke="#000" stroke-width="1.9" />
<line x1="1183.6" y1="367.0" x2="1206.4" y2="367.0" stroke="#000" stroke-width="1.9" />
<line x1="1182.6" y1="372.75" x2="1207.4" y2="372.75" stroke="#000" stroke-width="1.9" />
<line x1="1181.6" y1="378.5" x2="1208.4" y2="378.5" stroke="#000" stroke-width="1.9" />
<line x1="1180.6" y1="384.25" x2="1209.4" y2="384.25" stroke="#000" stroke-width="1.9" />
<line x1="1179.6" y1="390.0" x2="1210.4" y2="390.0" stroke="#000" stroke-width="1.9" />
<rect x="1180" y="389.5" width="30" height="2.6" fill="#6a6a6a" stroke="none" stroke-width="0" rx="0" />
<path d="M1243.0 364.0 L1253.0 364.0 L1253.0 366.5 L1250.2 369.3 L1252.6 371.7 L1250.7 373.6 L1248.3 371.2 L1245.5 374.0 L1243.0 374.0 Z" fill="#000" stroke="none" stroke-width="0" />
<path d="M1273.0 364.0 L1263.0 364.0 L1263.0 366.5 L1265.8 369.3 L1263.4 371.7 L1265.3 373.6 L1267.7 371.2 L1270.5 374.0 L1273.0 374.0 Z" fill="#000" stroke="none" stroke-width="0" />
<path d="M1243.0 394.0 L1253.0 394.0 L1253.0 391.5 L1250.2 388.7 L1252.6 386.3 L1250.7 384.4 L1248.3 386.8 L1245.5 384.0 L1243.0 384.0 Z" fill="#000" stroke="none" stroke-width="0" />
<path d="M1273.0 394.0 L1263.0 394.0 L1263.0 391.5 L1265.8 388.7 L1263.4 386.3 L1265.3 384.4 L1267.7 386.8 L1270.5 384.0 L1273.0 384.0 Z" fill="#000" stroke="none" stroke-width="0" />
<text x="476.7" y="256.3" font-size="18.5" fill="#111" font-weight="normal" text-anchor="start" textLength="482.5" lengthAdjust="spacing" >[GC:G0 G54 G17 G21 G90 G94 M5 M9 T0 F10 S2900]</text>
<text x="476.7" y="278" font-size="18.5" fill="#111" font-weight="normal" text-anchor="start" textLength="80.4" lengthAdjust="spacing" >F/S: 0 / 0</text>
<text x="476.7" y="299.6" font-size="18.5" fill="#111" font-weight="normal" text-anchor="start" textLength="45.5" lengthAdjust="spacingAndGlyphs" >PS: P</text>
<text x="476.7" y="592" font-size="18.5" fill="#111" font-weight="normal" text-anchor="start" textLength="167.6" lengthAdjust="spacing" >X: 0.000 ... 66.610</text>
<text x="476.7" y="614" font-size="18.5" fill="#111" font-weight="normal" text-anchor="start" textLength="170.3" lengthAdjust="spacing" >Y: 0.000 ... 48.880</text>
<text x="476.7" y="636" font-size="18.5" fill="#111" font-weight="normal" text-anchor="start" textLength="160.3" lengthAdjust="spacing" >Z: -1.000 ... 1.000</text>
<text x="476.7" y="657.6" font-size="18.5" fill="#111" font-weight="normal" text-anchor="start" textLength="215.7" lengthAdjust="spacing" >66.610 / 48.880 / 2.000</text>
<text x="1276.5" y="592" font-size="18.5" fill="#111" font-weight="normal" text-anchor="end" textLength="176.5" lengthAdjust="spacing" >00:01:48 / 00:03:12</text>
<text x="1276.5" y="613.6" font-size="18.5" fill="#111" font-weight="normal" text-anchor="end" textLength="135.6" lengthAdjust="spacing" >Buffer: 0 / 0 / 0</text>
<text x="1276.5" y="635.4" font-size="18.5" fill="#111" font-weight="normal" text-anchor="end" textLength="129" lengthAdjust="spacing" >Vertices: 4977</text>
<text x="1276.5" y="657.6" font-size="18.5" fill="#111" font-weight="normal" text-anchor="end" textLength="68.3" lengthAdjust="spacing" >FPS: 63</text>
<rect x="478" y="730" width="820" height="7.5" fill="#e0e0e0" stroke="none" stroke-width="0" rx="3.5" />
<circle cx="477.7" cy="735" r="20.5" fill="#000" stroke="none" stroke-width="0" opacity="0.08"/>
<circle cx="477.7" cy="733.8" r="20" fill="#808080" stroke="none" stroke-width="0" />
<rect x="1333.5" y="213" width="719" height="445.5" fill="#fff" stroke="#7a7a7a" stroke-width="2" rx="0" />
<rect x="1341.5" y="704" width="560.5" height="40" fill="#000" stroke="none" stroke-width="0" rx="9" opacity="0.18"/>
<rect x="1341.5" y="702.5" width="560.5" height="40" fill="#fff" stroke="#dedede" stroke-width="0.6" rx="9" />
<rect x="1866" y="707" width="32.5" height="31.5" rx="7" fill="url(#blue)"/>
<path d="M1875.5 719 L1882.2 725.5 L1889 719" fill="none" stroke="#fff" stroke-width="2.8" stroke-linecap="round" stroke-linejoin="round"/>
<rect x="1936" y="704" width="36.5" height="40" fill="#000" stroke="none" stroke-width="0" rx="8" opacity="0.15"/>
<rect x="1936" y="702.5" width="36.5" height="40" fill="#fff" stroke="#e2e2e2" stroke-width="0.6" rx="8" />
<rect x="2003.5" y="704" width="36.5" height="40" fill="#000" stroke="none" stroke-width="0" rx="8" opacity="0.15"/>
<rect x="2003.5" y="702.5" width="36.5" height="40" fill="#fff" stroke="#e2e2e2" stroke-width="0.6" rx="8" />
<path d="M1942 722 L1967 709 L1960 736 L1953 729 L1949 735 L1950 727 Z" fill="#000" stroke="none" stroke-width="0" />
<path d="M1950 727 L1966 711" fill="none" stroke="#fff" stroke-width="1.3" />
<path d="M2010 732 L2026 712 Q2031 706 2036 711 Q2040 716 2035 721 L2019 740 Q2014 744 2010 739 Q2007 735 2010 732 Z" fill="#000" stroke="none" stroke-width="0" />
<path d="M2013 733 L2020 725 L2025 730 L2018 738 Q2014 741 2012 738 Z" fill="#fff" stroke="none" stroke-width="0" />
<rect x="455.5" y="821.5" width="1597" height="43.5" fill="#ebebeb" stroke="#c6c6c6" stroke-width="2" rx="0" />
<text x="482.5" y="850.2" font-size="19" fill="#e2231a" font-weight="normal" text-anchor="start" textLength="97" lengthAdjust="spacing" >Heightmap</text>
<rect x="455" y="890.5" width="1598" height="759.5" fill="#fff" stroke="none" stroke-width="0" rx="0" />
<line x1="454.5" y1="890" x2="2053" y2="890" stroke="#858585" stroke-width="2" />
<line x1="455" y1="890" x2="455" y2="1650" stroke="#8a8a8a" stroke-width="2" />
<line x1="2052.5" y1="890" x2="2052.5" y2="1650" stroke="#b5b5b5" stroke-width="1" />
<line x1="455" y1="1649.8" x2="2053" y2="1649.8" stroke="#9a9a9a" stroke-width="1.2" />
<rect x="456" y="950.5" width="1596" height="59.5" fill="#f4f4f4" stroke="none" stroke-width="0" rx="0" />
<line x1="456" y1="950.5" x2="2051" y2="950.5" stroke="#d9d9d9" stroke-width="1" stroke-dasharray="3 3"/>
<line x1="456" y1="1010.5" x2="2051" y2="1010.5" stroke="#d9d9d9" stroke-width="1" stroke-dasharray="3 3"/>
<line x1="456" y1="1070.5" x2="2051" y2="1070.5" stroke="#d9d9d9" stroke-width="1" stroke-dasharray="3 3"/>
<line x1="774.5" y1="891" x2="774.5" y2="1070" stroke="#d9d9d9" stroke-width="1" stroke-dasharray="3 3"/>
<line x1="1094.5" y1="891" x2="1094.5" y2="1070" stroke="#d9d9d9" stroke-width="1" stroke-dasharray="3 3"/>
<line x1="1413.5" y1="891" x2="1413.5" y2="1070" stroke="#d9d9d9" stroke-width="1" stroke-dasharray="3 3"/>
<line x1="1733.5" y1="891" x2="1733.5" y2="1070" stroke="#d9d9d9" stroke-width="1" stroke-dasharray="3 3"/>
<line x1="2050.5" y1="891" x2="2050.5" y2="1070" stroke="#d9d9d9" stroke-width="1" stroke-dasharray="3 3"/>
<text x="614.3" y="927" font-size="18.5" fill="#111" font-weight="normal" text-anchor="middle" textLength="50.8" lengthAdjust="spacing" >0.046</text>
<text x="934.1" y="927" font-size="18.5" fill="#111" font-weight="normal" text-anchor="middle" textLength="50.8" lengthAdjust="spacing" >0.094</text>
<text x="1253.8" y="927" font-size="18.5" fill="#111" font-weight="normal" text-anchor="middle" textLength="47.699999999999996" lengthAdjust="spacing" >0.142</text>
<text x="1573.5" y="927" font-size="18.5" fill="#111" font-weight="normal" text-anchor="middle" textLength="47.699999999999996" lengthAdjust="spacing" >0.184</text>
<text x="1893.2" y="927" font-size="18.5" fill="#111" font-weight="normal" text-anchor="middle" textLength="50.8" lengthAdjust="spacing" >0.224</text>
<text x="614.3" y="987.7" font-size="18.5" fill="#111" font-weight="normal" text-anchor="middle" textLength="50.8" lengthAdjust="spacing" >0.029</text>
<text x="934.1" y="987.7" font-size="18.5" fill="#111" font-weight="normal" text-anchor="middle" textLength="50.8" lengthAdjust="spacing" >0.094</text>
<text x="1253.8" y="987.7" font-size="18.5" fill="#111" font-weight="normal" text-anchor="middle" textLength="47.699999999999996" lengthAdjust="spacing" >0.142</text>
<text x="1573.5" y="987.7" font-size="18.5" fill="#111" font-weight="normal" text-anchor="middle" textLength="47.699999999999996" lengthAdjust="spacing" >0.160</text>
<text x="1893.2" y="987.7" font-size="18.5" fill="#111" font-weight="normal" text-anchor="middle" textLength="47.699999999999996" lengthAdjust="spacing" >0.184</text>
<text x="614.3" y="1047.5" font-size="18.5" fill="#111" font-weight="normal" text-anchor="middle" textLength="61" lengthAdjust="spacing" >-0.005</text>
<text x="934.1" y="1047.5" font-size="18.5" fill="#111" font-weight="normal" text-anchor="middle" textLength="50.8" lengthAdjust="spacing" >0.053</text>
<text x="1253.8" y="1047.5" font-size="18.5" fill="#111" font-weight="normal" text-anchor="middle" textLength="50.8" lengthAdjust="spacing" >0.088</text>
<text x="1573.5" y="1047.5" font-size="18.5" fill="#111" font-weight="normal" text-anchor="middle" textLength="44.599999999999994" lengthAdjust="spacing" >0.114</text>
<text x="1893.2" y="1047.5" font-size="18.5" fill="#111" font-weight="normal" text-anchor="middle" textLength="44.599999999999994" lengthAdjust="spacing" >0.115</text>
<rect x="458" y="1694.8" width="27" height="27" fill="#d0d0d0" stroke="none" stroke-width="0" rx="6" opacity="0.5"/>
<rect x="458" y="1694" width="27" height="27" fill="#ffffff" stroke="#cfcfcf" stroke-width="0.8" rx="6" />
<text x="494.4" y="1715" font-size="19" fill="#222" font-weight="normal" text-anchor="start" textLength="50" lengthAdjust="spacing" >Scroll</text>
<rect x="1190" y="1691.5" width="106" height="40" fill="#000" stroke="none" stroke-width="0" rx="9" opacity="0.13"/>
<rect x="1190" y="1690" width="106" height="40" fill="#fff" stroke="#dcdcdc" stroke-width="0.6" rx="9" />
<text x="1243.0" y="1715.4" font-size="18.5" fill="#111" font-weight="normal" text-anchor="middle" textLength="47" lengthAdjust="spacing" >Open</text>
<rect x="1328" y="1691.5" width="108" height="40" fill="#000" stroke="none" stroke-width="0" rx="9" opacity="0.13"/>
<rect x="1328" y="1690" width="108" height="40" fill="#fff" stroke="#dcdcdc" stroke-width="0.6" rx="9" />
<text x="1382.0" y="1715.4" font-size="18.5" fill="#111" font-weight="normal" text-anchor="middle" textLength="50" lengthAdjust="spacing" >Reset</text>
<rect x="1468" y="1691.5" width="109.5" height="40" fill="#000" stroke="none" stroke-width="0" rx="9" opacity="0.13"/>
<rect x="1468" y="1690" width="109.5" height="40" fill="#fff" stroke="#dcdcdc" stroke-width="0.6" rx="9" />
<text x="1522.75" y="1715.4" font-size="18.5" fill="#111" font-weight="normal" text-anchor="middle" textLength="51.5" lengthAdjust="spacing" >Probe</text>
<rect x="1609.5" y="1691.5" width="146.0" height="40" fill="#000" stroke="none" stroke-width="0" rx="9" opacity="0.13"/>
<rect x="1609.5" y="1690" width="146.0" height="40" fill="#f4f4f4" stroke="#dcdcdc" stroke-width="0.6" rx="9" />
<text x="1682.5" y="1715.4" font-size="18.5" fill="#b9b9b9" font-weight="normal" text-anchor="middle" textLength="80" lengthAdjust="spacingAndGlyphs" >From Line</text>
<rect x="1787.5" y="1691.5" width="112.5" height="40" fill="#000" stroke="none" stroke-width="0" rx="9" opacity="0.13"/>
<rect x="1787.5" y="1690" width="112.5" height="40" fill="#f4f4f4" stroke="#dcdcdc" stroke-width="0.6" rx="9" />
<text x="1843.75" y="1715.4" font-size="18.5" fill="#b9b9b9" font-weight="normal" text-anchor="middle" textLength="48" lengthAdjust="spacingAndGlyphs" >Pause</text>
<rect x="1931.5" y="1691.5" width="108.0" height="40" fill="#000" stroke="none" stroke-width="0" rx="9" opacity="0.13"/>
<rect x="1931.5" y="1690" width="108.0" height="40" fill="#f4f4f4" stroke="#dcdcdc" stroke-width="0.6" rx="9" />
<text x="1985.5" y="1715.4" font-size="18.5" fill="#b9b9b9" font-weight="normal" text-anchor="middle" textLength="45" lengthAdjust="spacing" >Abort</text>
<rect x="2086" y="239.8" width="400" height="133.6" fill="#e6e6e6" stroke="none" stroke-width="0" rx="0" />
<rect x="2092" y="225.7" width="22" height="4.4" fill="#111" stroke="none" stroke-width="0" rx="0" />
<text x="2120" y="234" font-size="19" fill="#111" font-weight="normal" text-anchor="start" textLength="145" lengthAdjust="spacing" >User commands</text>
<line x1="2268" y1="235" x2="2486" y2="235" stroke="#d9d9d9" stroke-width="1.2" />
<rect x="2117.1" y="275.2" width="67.7" height="65.39999999999999" fill="#ffffff" stroke="#000" stroke-width="1.9" rx="8" />
<rect x="2121.2" y="278.3" width="59.5" height="58.19999999999999" rx="3" fill="url(#btn)"/>
<rect x="2122.2" y="333.5" width="57.5" height="2.2" fill="#c4c4c4" stroke="none" stroke-width="0" rx="1" />
<rect x="2207.3" y="275.2" width="67.29999999999991" height="65.39999999999999" fill="#ffffff" stroke="#000" stroke-width="1.9" rx="8" />
<rect x="2211.4" y="278.3" width="59.09999999999991" height="58.19999999999999" rx="3" fill="url(#btn)"/>
<rect x="2212.4" y="333.5" width="57.09999999999991" height="2.2" fill="#c4c4c4" stroke="none" stroke-width="0" rx="1" />
<rect x="2297.4" y="275.2" width="67.1000000000001" height="65.39999999999999" fill="#ffffff" stroke="#000" stroke-width="1.9" rx="8" />
<rect x="2301.5" y="278.3" width="58.90000000000009" height="58.19999999999999" rx="3" fill="url(#btn)"/>
<rect x="2302.5" y="333.5" width="56.90000000000009" height="2.2" fill="#c4c4c4" stroke="none" stroke-width="0" rx="1" />
<rect x="2387.5" y="275.2" width="67.1000000000001" height="65.39999999999999" fill="#ffffff" stroke="#000" stroke-width="1.9" rx="8" />
<rect x="2391.6" y="278.3" width="58.90000000000009" height="58.19999999999999" rx="3" fill="url(#btn)"/>
<rect x="2392.6" y="333.5" width="56.90000000000009" height="2.2" fill="#c4c4c4" stroke="none" stroke-width="0" rx="1" />
<rect x="2132" y="292" width="5" height="32.5" fill="#000" stroke="none" stroke-width="0" rx="0" />
<rect x="2132" y="319.5" width="33" height="5" fill="#000" stroke="none" stroke-width="0" rx="0" />
<path d="M2129 296 L2134.5 288 L2140 296 Z" fill="#000" stroke="none" stroke-width="0" />
<path d="M2163 316 L2171 322 L2163 328 Z" fill="#000" stroke="none" stroke-width="0" />
<ellipse cx="2156" cy="301.5" rx="9" ry="10" fill="none" stroke="#000" stroke-width="3.2"/>
<line x1="2150" y1="312" x2="2162" y2="291" stroke="#000" stroke-width="2.2" />
<rect x="2224.5" y="289" width="7" height="23" fill="#000" stroke="none" stroke-width="0" rx="0" />
<path d="M2219 310 L2238 310 L2228 322 Z" fill="#000" stroke="none" stroke-width="0" />
<rect x="2224" y="322.5" width="32" height="3.5" fill="#000" stroke="none" stroke-width="0" rx="0" />
<ellipse cx="2250.5" cy="300.5" rx="9" ry="10" fill="none" stroke="#000" stroke-width="3.2"/>
<line x1="2244" y1="311" x2="2257" y2="290" stroke="#000" stroke-width="2.2" />
<circle cx="2328.5" cy="306" r="17.5" fill="none" stroke="#000" stroke-width="3" />
<line x1="2340" y1="319" x2="2350" y2="329" stroke="#000" stroke-width="4.5" />
<rect x="2326.5" y="295" width="4" height="10" fill="#000" stroke="none" stroke-width="0" rx="0" />
<path d="M2322 303 L2335 303 L2328.5 309 Z" fill="#000" stroke="none" stroke-width="0" />
<rect x="2320" y="312" width="17" height="2.5" fill="#000" stroke="none" stroke-width="0" rx="0" />
<rect x="2404.5" y="289.5" width="31.5" height="3.5" fill="#000" stroke="none" stroke-width="0" rx="0" />
<path d="M2407 306 L2420 297 L2433 306 Z" fill="#000" stroke="none" stroke-width="0" />
<rect x="2416" y="304" width="7.5" height="24" fill="#000" stroke="none" stroke-width="0" rx="0" />
<rect x="2086" y="415.7" width="400" height="142" fill="#e6e6e6" stroke="none" stroke-width="0" rx="0" />
<rect x="2092" y="401.9" width="22" height="4.4" fill="#111" stroke="none" stroke-width="0" rx="0" />
<text x="2120" y="410.2" font-size="19" fill="#111" font-weight="normal" text-anchor="start" textLength="163.5" lengthAdjust="spacing" >Emergency button</text>
<line x1="2288" y1="411" x2="2486" y2="411" stroke="#d9d9d9" stroke-width="1.2" />
<rect x="2117.4" y="451.5" width="337.2" height="72.8" fill="#fff" stroke="#000" stroke-width="1.9" rx="8" />
<rect x="2122.3" y="456" width="327.7" height="63.7" fill="#fe0000" stroke="none" stroke-width="0" rx="4" />
<path d="M2273.5 490 L2273.2 475 Q2273.2 469.5 2278 469.3 L2280.8 469 Q2282.5 464.8 2285.8 464.8 Q2289.5 465 2290.5 468.8 L2294.8 469.8 Q2298 471.5 2298.2 476 L2299.5 477.2 Q2303.6 477.8 2303.8 481.5 L2302.3 503 Q2301.8 509.6 2296 509.8 L2280.5 509.8 Q2277.2 509.6 2275.7 507.2 L2264.3 492.5 Q2262.2 488.5 2265 486.3 Q2268.5 484.3 2273.5 490 Z" fill="none" stroke="#000" stroke-width="2.7" stroke-linejoin="round"/>
<line x1="2282.4" y1="472.5" x2="2282.4" y2="487.4" stroke="#a00000" stroke-width="1.6" />
<line x1="2288.5" y1="472.5" x2="2288.5" y2="487.4" stroke="#a00000" stroke-width="1.6" />
<line x1="2295.1" y1="472.5" x2="2295.1" y2="487.4" stroke="#a00000" stroke-width="1.6" />
<rect x="2086" y="600.2" width="400" height="241.5" fill="#e6e6e6" stroke="none" stroke-width="0" rx="0" />
<rect x="2092" y="586.2" width="22" height="4.4" fill="#111" stroke="none" stroke-width="0" rx="0" />
<text x="2120" y="594.5" font-size="19" fill="#111" font-weight="normal" text-anchor="start" textLength="168" lengthAdjust="spacing" >Coordinate system</text>
<line x1="2292" y1="598.3" x2="2486" y2="598.3" stroke="#d9d9d9" stroke-width="1.2" />
<rect x="2117.1" y="639.4" width="67.7" height="73.09999999999998" fill="#ffffff" stroke="#000" stroke-width="1.9" rx="8" />
<rect x="2121.2" y="642.5" width="59.5" height="65.89999999999998" rx="3" fill="url(#btn)"/>
<rect x="2122.2" y="705.4" width="57.5" height="2.2" fill="#c4c4c4" stroke="none" stroke-width="0" rx="1" />
<rect x="2119.0" y="641.3" width="63.9" height="69.29999999999998" fill="none" stroke="#7fb0d8" stroke-width="2.4" rx="6" />
<text x="2151.45" y="689.7" font-size="34" fill="#111" font-weight="normal" text-anchor="middle" textLength="38.5" lengthAdjust="spacing" stroke="#111" stroke-width="1.7">54</text>
<rect x="2117.1" y="735.4" width="67.7" height="73.30000000000003" fill="#ffffff" stroke="#000" stroke-width="1.9" rx="8" />
<rect x="2121.2" y="738.5" width="59.5" height="66.10000000000002" rx="3" fill="url(#btn)"/>
<rect x="2122.2" y="801.6" width="57.5" height="2.2" fill="#c4c4c4" stroke="none" stroke-width="0" rx="1" />
<text x="2150.95" y="784.5" font-size="34" fill="#111" font-weight="normal" text-anchor="middle" textLength="40.5" lengthAdjust="spacingAndGlyphs" stroke="#111" stroke-width="1.7">X0</text>
<rect x="2207.3" y="639.4" width="67.29999999999991" height="73.09999999999998" fill="#ffffff" stroke="#000" stroke-width="1.9" rx="8" />
<rect x="2211.4" y="642.5" width="59.09999999999991" height="65.89999999999998" rx="3" fill="url(#btn)"/>
<rect x="2212.4" y="705.4" width="57.09999999999991" height="2.2" fill="#c4c4c4" stroke="none" stroke-width="0" rx="1" />
<text x="2240.95" y="688.2" font-size="34" fill="#111" font-weight="normal" text-anchor="middle" textLength="38.5" lengthAdjust="spacing" stroke="#111" stroke-width="1.7">55</text>
<rect x="2207.3" y="735.4" width="67.29999999999991" height="73.30000000000003" fill="#ffffff" stroke="#000" stroke-width="1.9" rx="8" />
<rect x="2211.4" y="738.5" width="59.09999999999991" height="66.10000000000002" rx="3" fill="url(#btn)"/>
<rect x="2212.4" y="801.6" width="57.09999999999991" height="2.2" fill="#c4c4c4" stroke="none" stroke-width="0" rx="1" />
<text x="2240.95" y="784.5" font-size="34" fill="#111" font-weight="normal" text-anchor="middle" textLength="40.5" lengthAdjust="spacingAndGlyphs" stroke="#111" stroke-width="1.7">Y0</text>
<rect x="2297.4" y="639.4" width="67.1000000000001" height="73.09999999999998" fill="#ffffff" stroke="#000" stroke-width="1.9" rx="8" />
<rect x="2301.5" y="642.5" width="58.90000000000009" height="65.89999999999998" rx="3" fill="url(#btn)"/>
<rect x="2302.5" y="705.4" width="56.90000000000009" height="2.2" fill="#c4c4c4" stroke="none" stroke-width="0" rx="1" />
<text x="2330.95" y="688.2" font-size="34" fill="#111" font-weight="normal" text-anchor="middle" textLength="38.5" lengthAdjust="spacing" stroke="#111" stroke-width="1.7">56</text>
<rect x="2297.4" y="735.4" width="67.1000000000001" height="73.30000000000003" fill="#ffffff" stroke="#000" stroke-width="1.9" rx="8" />
<rect x="2301.5" y="738.5" width="58.90000000000009" height="66.10000000000002" rx="3" fill="url(#btn)"/>
<rect x="2302.5" y="801.6" width="56.90000000000009" height="2.2" fill="#c4c4c4" stroke="none" stroke-width="0" rx="1" />
<text x="2330.95" y="784.5" font-size="34" fill="#111" font-weight="normal" text-anchor="middle" textLength="40.5" lengthAdjust="spacing" stroke="#111" stroke-width="1.7">Z0</text>
<rect x="2387.5" y="639.4" width="67.1000000000001" height="73.09999999999998" fill="#ffffff" stroke="#000" stroke-width="1.9" rx="8" />
<rect x="2391.6" y="642.5" width="58.90000000000009" height="65.89999999999998" rx="3" fill="url(#btn)"/>
<rect x="2392.6" y="705.4" width="56.90000000000009" height="2.2" fill="#c4c4c4" stroke="none" stroke-width="0" rx="1" />
<text x="2421.05" y="688.2" font-size="34" fill="#111" font-weight="normal" text-anchor="middle" textLength="38.5" lengthAdjust="spacing" stroke="#111" stroke-width="1.7">57</text>
<rect x="2387.5" y="735.4" width="67.1000000000001" height="73.30000000000003" fill="#ffffff" stroke="#000" stroke-width="1.9" rx="8" />
<rect x="2391.6" y="738.5" width="58.90000000000009" height="66.10000000000002" rx="3" fill="url(#btn)"/>
<rect x="2392.6" y="801.6" width="56.90000000000009" height="2.2" fill="#c4c4c4" stroke="none" stroke-width="0" rx="1" />
<text x="2421.05" y="784.5" font-size="34" fill="#111" font-weight="normal" text-anchor="middle" textLength="40.5" lengthAdjust="spacing" stroke="#111" stroke-width="1.7">00</text>
<rect x="2086" y="878" width="399.5" height="866" fill="#e6e6e6" stroke="none" stroke-width="0" rx="0" />
<line x1="2088" y1="877" x2="2484" y2="877" stroke="#d6d6d6" stroke-width="1.2" />
<rect x="2518.5" y="239.5" width="399.5" height="334.5" fill="#e6e6e6" stroke="none" stroke-width="0" rx="0" />
<line x1="2518.5" y1="238.3" x2="2532" y2="238.3" stroke="#d9d9d9" stroke-width="1.2" />
<line x1="2588.4" y1="238.3" x2="2918" y2="238.3" stroke="#d9d9d9" stroke-width="1.2" />
<text x="2536.5" y="240" font-size="19" fill="#111" font-weight="normal" text-anchor="start" textLength="46" lengthAdjust="spacing" >State</text>
<text x="2582.5" y="296.1" font-size="19" fill="#111" font-weight="normal" text-anchor="start" textLength="44" lengthAdjust="spacing" >Work</text>
<text x="2746.4" y="296.1" font-size="19" fill="#111" font-weight="normal" text-anchor="start" textLength="75" lengthAdjust="spacing" >Machine</text>
<text x="2548.3" y="346.8" font-size="19" fill="#111" font-weight="normal" text-anchor="start" >X</text>
<rect x="2585.6" y="352.8" width="136.4000000000001" height="2" fill="#b8b8b8" stroke="none" stroke-width="0" rx="0" />
<rect x="2585.6" y="325.6" width="136.4000000000001" height="27.899999999999988" fill="#fff" stroke="none" stroke-width="0" rx="0" />
<rect x="2585.6" y="325.6" width="136.4000000000001" height="28.69999999999999" fill="none" stroke="#dcdcdc" stroke-width="0.6" rx="0" />
<text x="2650.8" y="346.8" font-size="19" fill="#111" font-weight="normal" text-anchor="middle" textLength="64" lengthAdjust="spacing" >66.609</text>
<rect x="2749.5" y="352.8" width="134.9000000000001" height="2" fill="#b8b8b8" stroke="none" stroke-width="0" rx="0" />
<rect x="2749.5" y="325.6" width="134.9000000000001" height="27.899999999999988" fill="#fff" stroke="none" stroke-width="0" rx="0" />
<rect x="2749.5" y="325.6" width="134.9000000000001" height="28.69999999999999" fill="none" stroke="#dcdcdc" stroke-width="0.6" rx="0" />
<text x="2813.95" y="346.8" font-size="19" fill="#111" font-weight="normal" text-anchor="middle" textLength="64" lengthAdjust="spacing" >68.262</text>
<text x="2548.3" y="406.9" font-size="19" fill="#111" font-weight="normal" text-anchor="start" >Y</text>
<rect x="2585.6" y="413.2" width="136.4000000000001" height="2" fill="#b8b8b8" stroke="none" stroke-width="0" rx="0" />
<rect x="2585.6" y="385.7" width="136.4000000000001" height="28.2" fill="#fff" stroke="none" stroke-width="0" rx="0" />
<rect x="2585.6" y="385.7" width="136.4000000000001" height="29.0" fill="none" stroke="#dcdcdc" stroke-width="0.6" rx="0" />
<text x="2650.8" y="406.9" font-size="19" fill="#111" font-weight="normal" text-anchor="middle" textLength="64" lengthAdjust="spacing" >48.880</text>
<rect x="2749.5" y="413.2" width="134.9000000000001" height="2" fill="#b8b8b8" stroke="none" stroke-width="0" rx="0" />
<rect x="2749.5" y="385.7" width="134.9000000000001" height="28.2" fill="#fff" stroke="none" stroke-width="0" rx="0" />
<rect x="2749.5" y="385.7" width="134.9000000000001" height="29.0" fill="none" stroke="#dcdcdc" stroke-width="0.6" rx="0" />
<text x="2813.95" y="406.9" font-size="19" fill="#111" font-weight="normal" text-anchor="middle" textLength="64" lengthAdjust="spacing" >30.760</text>
<text x="2548.3" y="466.6" font-size="19" fill="#111" font-weight="normal" text-anchor="start" >Z</text>
<rect x="2585.6" y="473.1" width="136.4000000000001" height="2" fill="#b8b8b8" stroke="none" stroke-width="0" rx="0" />
<rect x="2585.6" y="445.4" width="136.4000000000001" height="28.400000000000045" fill="#fff" stroke="none" stroke-width="0" rx="0" />
<rect x="2585.6" y="445.4" width="136.4000000000001" height="29.200000000000045" fill="none" stroke="#dcdcdc" stroke-width="0.6" rx="0" />
<text x="2650.8" y="466.6" font-size="19" fill="#111" font-weight="normal" text-anchor="middle" textLength="50" lengthAdjust="spacing" >1.000</text>
<rect x="2749.5" y="473.1" width="134.9000000000001" height="2" fill="#b8b8b8" stroke="none" stroke-width="0" rx="0" />
<rect x="2749.5" y="445.4" width="134.9000000000001" height="28.400000000000045" fill="#fff" stroke="none" stroke-width="0" rx="0" />
<rect x="2749.5" y="445.4" width="134.9000000000001" height="29.200000000000045" fill="none" stroke="#dcdcdc" stroke-width="0.6" rx="0" />
<text x="2813.95" y="466.6" font-size="19" fill="#111" font-weight="normal" text-anchor="middle" textLength="70" lengthAdjust="spacing" >-18.343</text>
<text x="2594.8" y="525.6" font-size="19" fill="#111" font-weight="normal" text-anchor="start" textLength="62" lengthAdjust="spacing" >Status:</text>
<rect x="2690.3" y="503.5" width="177.6" height="37" fill="#d2d2d2" stroke="none" stroke-width="0" rx="0" />
<rect x="2690.3" y="502.5" width="177.6" height="36.5" fill="#ebebeb" stroke="#dadada" stroke-width="0.8" rx="0" />
<text x="2776" y="526.7" font-size="19" fill="#222" font-weight="normal" text-anchor="middle" textLength="31" lengthAdjust="spacing" >Idle</text>
<rect x="2518.5" y="602.7" width="399.5" height="210.5" fill="#e6e6e6" stroke="none" stroke-width="0" rx="0" />
<line x1="2518.5" y1="600.6" x2="2532" y2="600.6" stroke="#d9d9d9" stroke-width="1.2" />
<line x1="2609.8" y1="600.6" x2="2918" y2="600.6" stroke="#d9d9d9" stroke-width="1.2" />
<text x="2538" y="602" font-size="19" fill="#111" font-weight="normal" text-anchor="start" textLength="65" lengthAdjust="spacing" >Control</text>
<rect x="2549.2000000000003" y="641.3" width="67.49999999999973" height="57.59999999999998" fill="#ffffff" stroke="#000" stroke-width="1.9" rx="8" />
<rect x="2553.3" y="644.4" width="59.29999999999973" height="50.39999999999998" rx="3" fill="url(#btn)"/>
<rect x="2554.3" y="691.8" width="57.29999999999973" height="2.2" fill="#c4c4c4" stroke="none" stroke-width="0" rx="1" />
<rect x="2549.2000000000003" y="721.4" width="67.49999999999973" height="57.300000000000026" fill="#ffffff" stroke="#000" stroke-width="1.9" rx="8" />
<rect x="2553.3" y="724.5" width="59.29999999999973" height="50.10000000000002" rx="3" fill="url(#btn)"/>
<rect x="2554.3" y="771.6" width="57.29999999999973" height="2.2" fill="#c4c4c4" stroke="none" stroke-width="0" rx="1" />
<rect x="2639.4" y="641.3" width="67.50000000000018" height="57.59999999999998" fill="#ffffff" stroke="#000" stroke-width="1.9" rx="8" />
<rect x="2643.5" y="644.4" width="59.30000000000018" height="50.39999999999998" rx="3" fill="url(#btn)"/>
<rect x="2644.5" y="691.8" width="57.30000000000018" height="2.2" fill="#c4c4c4" stroke="none" stroke-width="0" rx="1" />
<rect x="2639.4" y="721.4" width="67.50000000000018" height="57.300000000000026" fill="#ffffff" stroke="#000" stroke-width="1.9" rx="8" />
<rect x="2643.5" y="724.5" width="59.30000000000018" height="50.10000000000002" rx="3" fill="url(#btn)"/>
<rect x="2644.5" y="771.6" width="57.30000000000018" height="2.2" fill="#c4c4c4" stroke="none" stroke-width="0" rx="1" />
<rect x="2729.4" y="641.3" width="67.29999999999991" height="57.59999999999998" fill="#ffffff" stroke="#000" stroke-width="1.9" rx="8" />
<rect x="2733.5" y="644.4" width="59.09999999999991" height="50.39999999999998" rx="3" fill="url(#btn)"/>
<rect x="2734.5" y="691.8" width="57.09999999999991" height="2.2" fill="#c4c4c4" stroke="none" stroke-width="0" rx="1" />
<rect x="2729.4" y="721.4" width="67.29999999999991" height="57.300000000000026" fill="#ffffff" stroke="#000" stroke-width="1.9" rx="8" />
<rect x="2733.5" y="724.5" width="59.09999999999991" height="50.10000000000002" rx="3" fill="url(#btn)"/>
<rect x="2734.5" y="771.6" width="57.09999999999991" height="2.2" fill="#c4c4c4" stroke="none" stroke-width="0" rx="1" />
<rect x="2819.2000000000003" y="641.3" width="67.39999999999982" height="57.59999999999998" fill="#ffffff" stroke="#000" stroke-width="1.9" rx="8" />
<rect x="2823.3" y="644.4" width="59.19999999999982" height="50.39999999999998" rx="3" fill="url(#btn)"/>
<rect x="2824.3" y="691.8" width="57.19999999999982" height="2.2" fill="#c4c4c4" stroke="none" stroke-width="0" rx="1" />
<rect x="2819.2000000000003" y="721.4" width="67.39999999999982" height="57.300000000000026" fill="#ffffff" stroke="#000" stroke-width="1.9" rx="8" />
<rect x="2823.3" y="724.5" width="59.19999999999982" height="50.10000000000002" rx="3" fill="url(#btn)"/>
<rect x="2824.3" y="771.6" width="57.19999999999982" height="2.2" fill="#c4c4c4" stroke="none" stroke-width="0" rx="1" />
<circle cx="2581" cy="667" r="17" fill="none" stroke="#000" stroke-width="3" />
<line x1="2592" y1="680" x2="2602" y2="690" stroke="#000" stroke-width="4.5" />
<path d="M2572 667 L2581 658 L2590 667 L2587 667 L2587 676 L2575 676 L2575 667 Z" fill="#000" stroke="none" stroke-width="0" />
<circle cx="2672.2" cy="669.8" r="19" fill="none" stroke="#000" stroke-width="3" />
<rect x="2666" y="662.5" width="4" height="15.5" fill="#000" stroke="none" stroke-width="0" rx="0" />
<rect x="2674.3" y="662.5" width="4" height="15.5" fill="#000" stroke="none" stroke-width="0" rx="0" />
<path d="M2761.5 653.8 A17 17 0 1 1 2746.6 666.3" fill="none" stroke="#000" stroke-width="4.4" />
<path d="M2752.5 655.5 L2741.5 665.8 L2752.5 668.5 Z" fill="#000" stroke="none" stroke-width="0" />
<path d="M2843.8 661 L2843.8 658.7 A8 8 0 0 1 2859.8 658.7 L2859.8 667" fill="none" stroke="#000" stroke-width="3.6" />
<rect x="2838" y="666" width="27.7" height="23.6" fill="#000" stroke="none" stroke-width="0" rx="0" />
<rect x="2850" y="676" width="4" height="6" fill="#fff" stroke="none" stroke-width="0" rx="0" />
<rect x="2563.5" y="731.5" width="38" height="37" fill="none" stroke="#000" stroke-width="2.6" rx="0" />
<rect x="2568.5" y="739.8" width="14" height="2.5" fill="#000" stroke="none" stroke-width="0" rx="0" />
<rect x="2568.5" y="749.8" width="14" height="2.5" fill="#000" stroke="none" stroke-width="0" rx="0" />
<rect x="2568.5" y="758.8" width="14" height="2.5" fill="#000" stroke="none" stroke-width="0" rx="0" />
<path d="M2586 740 L2589 743 L2595 737 M2586 749 L2589 752 L2595 746" fill="none" stroke="#000" stroke-width="2" />
<path d="M2670 729 A21 21 0 1 0 2690 764 A16 16 0 0 1 2670 729 Z" fill="none" stroke="#000" stroke-width="2.6" />
<path d="M2672 748 L2680 744 L2674 752 L2684 748 M2680 738 L2688 734 L2683 741 L2691 738" fill="none" stroke="#000" stroke-width="3" />
<path d="M2746 728 L2778 728 L2778 764 L2760 771 L2760 764 L2746 764 Z" fill="#000" stroke="none" stroke-width="0" />
<path d="M2762 740 L2773 735 L2773 761 L2762 766 Z" fill="#e8e8e8" stroke="none" stroke-width="0" />
<path d="M2851.5 730 Q2866 748 2866 757 A14.5 14.5 0 0 1 2837 757 Q2837 748 2851.5 730 Z" fill="none" stroke="#000" stroke-width="2.4" />
<path d="M2843 755 Q2843 763 2851 765" fill="none" stroke="#000" stroke-width="2" />
<rect x="2518.5" y="853.5" width="399.5" height="194" fill="#e6e6e6" stroke="none" stroke-width="0" rx="0" />
<rect x="2524" y="839.7" width="22" height="4.4" fill="#111" stroke="none" stroke-width="0" rx="0" />
<text x="2552" y="848" font-size="19" fill="#111" font-weight="normal" text-anchor="start" textLength="66.5" lengthAdjust="spacing" >Spindle</text>
<line x1="2622" y1="852.2" x2="2918" y2="852.2" stroke="#d9d9d9" stroke-width="1.2" />
<text x="2552.4" y="925.2" font-size="19" fill="#111" font-weight="normal" text-anchor="start" textLength="61.5" lengthAdjust="spacing" >Speed:</text>
<rect x="2725.6" y="930.8" width="62.40000000000009" height="2" fill="#b8b8b8" stroke="none" stroke-width="0" rx="0" />
<rect x="2725.6" y="903.7" width="62.40000000000009" height="27.79999999999991" fill="#fff" stroke="none" stroke-width="0" rx="0" />
<rect x="2725.6" y="903.7" width="62.40000000000009" height="28.59999999999991" fill="none" stroke="#dcdcdc" stroke-width="0.6" rx="0" />
<text x="2730.4" y="925.2" font-size="19" fill="#111" font-weight="normal" text-anchor="start" textLength="45.4" lengthAdjust="spacing" >2900</text>
<rect x="2552.4" y="982.0" width="235.5999999999999" height="8" fill="#d9d9d9" stroke="none" stroke-width="0" rx="4.0" />
<rect x="2552.4" y="982.0" width="76.40000000000009" height="8" fill="#1a82fb" stroke="none" stroke-width="0" rx="4.0" />
<circle cx="2628.8" cy="987" r="20.6" fill="#000" stroke="none" stroke-width="0" opacity="0.12"/>
<circle cx="2628.8" cy="986" r="20" fill="#fff" stroke="#d2d2d2" stroke-width="0.8" />
<rect x="2813.1" y="917.5" width="73.50000000000018" height="72.99999999999996" fill="#ffffff" stroke="#000" stroke-width="1.9" rx="8" />
<rect x="2817.2" y="920.6" width="65.30000000000018" height="65.79999999999995" rx="3" fill="url(#btn)"/>
<rect x="2818.2" y="983.4" width="63.30000000000018" height="2.2" fill="#c4c4c4" stroke="none" stroke-width="0" rx="1" />
<circle cx="2849.4" cy="953.8" r="19.5" fill="#000" stroke="none" stroke-width="0" />
<rect x="2845.4" y="931.8" width="8" height="6" fill="#000" transform="rotate(0 2849.4 953.8)"/>
<rect x="2845.4" y="931.8" width="8" height="6" fill="#000" transform="rotate(45 2849.4 953.8)"/>
<rect x="2845.4" y="931.8" width="8" height="6" fill="#000" transform="rotate(90 2849.4 953.8)"/>
<rect x="2845.4" y="931.8" width="8" height="6" fill="#000" transform="rotate(135 2849.4 953.8)"/>
<rect x="2845.4" y="931.8" width="8" height="6" fill="#000" transform="rotate(180 2849.4 953.8)"/>
<rect x="2845.4" y="931.8" width="8" height="6" fill="#000" transform="rotate(225 2849.4 953.8)"/>
<rect x="2845.4" y="931.8" width="8" height="6" fill="#000" transform="rotate(270 2849.4 953.8)"/>
<rect x="2845.4" y="931.8" width="8" height="6" fill="#000" transform="rotate(315 2849.4 953.8)"/>
<circle cx="2865.105952052692" cy="960.3056183502065" r="1.3" fill="#d8d8d8" stroke="none" stroke-width="0" />
<circle cx="2855.9056183502066" cy="969.5059520526918" r="1.3" fill="#d8d8d8" stroke="none" stroke-width="0" />
<circle cx="2842.8943816497936" cy="969.5059520526918" r="1.3" fill="#d8d8d8" stroke="none" stroke-width="0" />
<circle cx="2833.6940479473083" cy="960.3056183502065" r="1.3" fill="#d8d8d8" stroke="none" stroke-width="0" />
<circle cx="2833.6940479473083" cy="947.2943816497934" r="1.3" fill="#d8d8d8" stroke="none" stroke-width="0" />
<circle cx="2842.8943816497936" cy="938.0940479473081" r="1.3" fill="#d8d8d8" stroke="none" stroke-width="0" />
<circle cx="2855.9056183502066" cy="938.0940479473081" r="1.3" fill="#d8d8d8" stroke="none" stroke-width="0" />
<circle cx="2865.105952052692" cy="947.2943816497934" r="1.3" fill="#d8d8d8" stroke="none" stroke-width="0" />
<circle cx="2849.4" cy="953.8" r="12" fill="#e6e6e6" stroke="none" stroke-width="0" />
<circle cx="2849.4" cy="953.8" r="10" fill="none" stroke="#808080" stroke-width="2" />
<circle cx="2849.4" cy="953.8" r="7.5" fill="#fff" stroke="none" stroke-width="0" />
<circle cx="2849.4" cy="953.8" r="12" fill="none" stroke="#000" stroke-width="1.2" />
<rect x="2518.5" y="1090.3" width="399.5" height="654" fill="#e6e6e6" stroke="none" stroke-width="0" rx="0" />
<rect x="2524" y="1076.0" width="22" height="4.4" fill="#111" stroke="none" stroke-width="0" rx="0" />
<text x="2552" y="1084.3" font-size="19" fill="#111" font-weight="normal" text-anchor="start" textLength="31.5" lengthAdjust="spacing" >Jog</text>
<line x1="2588.3" y1="1088.3" x2="2918" y2="1088.3" stroke="#d9d9d9" stroke-width="1.2" />
<rect x="2633.5" y="1129.2" width="57.2" height="57.2" fill="#fff" stroke="#000" stroke-width="1.9" rx="8" />
<rect x="2638.2" y="1133.8" width="48" height="48.2" fill="#94b4d6" stroke="none" stroke-width="0" rx="3" />
<rect x="2638.2" y="1179.8" width="48" height="2" fill="#7b9cc0" stroke="none" stroke-width="0" rx="1" />
<rect x="2811.3" y="1129.2" width="57.2" height="57.2" fill="#fff" stroke="#000" stroke-width="1.9" rx="8" />
<rect x="2815.4" y="1132.3" width="49" height="50" rx="3" fill="url(#btn)"/>
<rect x="2816.4" y="1179.3" width="47" height="2.2" fill="#c4c4c4" stroke="none" stroke-width="0" rx="1" />
<rect x="2553.2000000000003" y="1209.1000000000001" width="57.2" height="57.2" fill="#fff" stroke="#000" stroke-width="1.9" rx="8" />
<rect x="2557.9" y="1213.7" width="48" height="48.2" fill="#94b4d6" stroke="none" stroke-width="0" rx="3" />
<rect x="2557.9" y="1259.7" width="48" height="2" fill="#7b9cc0" stroke="none" stroke-width="0" rx="1" />
<rect x="2633.5" y="1209.1000000000001" width="57.2" height="57.2" fill="#fff" stroke="#000" stroke-width="1.9" rx="8" />
<rect x="2637.6" y="1212.2" width="49" height="50" rx="3" fill="url(#btn)"/>
<rect x="2638.6" y="1259.2" width="47" height="2.2" fill="#c4c4c4" stroke="none" stroke-width="0" rx="1" />
<rect x="2713.5" y="1209.1000000000001" width="57.2" height="57.2" fill="#fff" stroke="#000" stroke-width="1.9" rx="8" />
<rect x="2718.2" y="1213.7" width="48" height="48.2" fill="#94b4d6" stroke="none" stroke-width="0" rx="3" />
<rect x="2718.2" y="1259.7" width="48" height="2" fill="#7b9cc0" stroke="none" stroke-width="0" rx="1" />
<rect x="2633.5" y="1289.3000000000002" width="57.2" height="57.2" fill="#fff" stroke="#000" stroke-width="1.9" rx="8" />
<rect x="2638.2" y="1293.9" width="48" height="48.2" fill="#94b4d6" stroke="none" stroke-width="0" rx="3" />
<rect x="2638.2" y="1339.9" width="48" height="2" fill="#7b9cc0" stroke="none" stroke-width="0" rx="1" />
<rect x="2811.3" y="1289.3000000000002" width="57.2" height="57.2" fill="#fff" stroke="#000" stroke-width="1.9" rx="8" />
<rect x="2815.4" y="1292.4" width="49" height="50" rx="3" fill="url(#btn)"/>
<rect x="2816.4" y="1339.4" width="47" height="2.2" fill="#c4c4c4" stroke="none" stroke-width="0" rx="1" />
<path d="M2650 1162 L2662 1150 L2674 1162" fill="none" stroke="#000" stroke-width="6.5" stroke-linecap="round" stroke-linejoin="miter"/>
<path d="M2825.5 1167 L2840 1149 L2854.5 1167 Z" fill="#000" stroke="none" stroke-width="0" />
<path d="M2580 1226 L2570 1237.5 L2580 1249" fill="none" stroke="#000" stroke-width="6.5" stroke-linecap="round"/>
<circle cx="2662.1" cy="1237.7" r="18" fill="none" stroke="#000" stroke-width="3" />
<line x1="2649.5" y1="1250.5" x2="2674.5" y2="1225" stroke="#000" stroke-width="3" />
<path d="M2736 1226 L2746 1237.5 L2736 1249" fill="none" stroke="#000" stroke-width="6.5" stroke-linecap="round"/>
<path d="M2650 1311 L2662 1323 L2674 1311" fill="none" stroke="#000" stroke-width="6.5" stroke-linecap="round"/>
<path d="M2825.5 1309 L2854.5 1309 L2840 1327 Z" fill="#000" stroke="none" stroke-width="0" />
<text x="2552.5" y="1436.7" font-size="19" fill="#111" font-weight="normal" text-anchor="start" textLength="45.5" lengthAdjust="spacing" >Step:</text>
<rect x="2661.7" y="1412.2" width="197.70000000000027" height="40.299999999999955" fill="#000" stroke="none" stroke-width="0" rx="10" opacity="0.15"/>
<rect x="2661.7" y="1410.7" width="197.70000000000027" height="40.299999999999955" fill="#fff" stroke="#e0e0e0" stroke-width="0.6" rx="10" />
<rect x="2823.9" y="1415.0" width="31.7" height="31.8" rx="7" fill="url(#blue)"/>
<path d="M2833.3 1428.2 L2839.8 1434.5 L2846.3 1428.2" fill="none" stroke="#fff" stroke-width="2.8" stroke-linecap="round" stroke-linejoin="round"/>
<text x="2667" y="1434.6" font-size="19" fill="#111" font-weight="normal" text-anchor="start" >5</text>
<rect x="2556.4" y="1495.6" width="309.0" height="8" fill="#d9d9d9" stroke="none" stroke-width="0" rx="4.0" />
<rect x="2556.4" y="1495.6" width="199.5" height="8" fill="#1a82fb" stroke="none" stroke-width="0" rx="4.0" />
<circle cx="2755.9" cy="1500.6" r="20.6" fill="#000" stroke="none" stroke-width="0" opacity="0.12"/>
<circle cx="2755.9" cy="1499.6" r="20" fill="#fff" stroke="#d2d2d2" stroke-width="0.8" />
<text x="2552.5" y="1579" font-size="19" fill="#111" font-weight="normal" text-anchor="start" textLength="48" lengthAdjust="spacingAndGlyphs" >Feed:</text>
<rect x="2722" y="1554.5" width="137.4000000000001" height="40.299999999999955" fill="#000" stroke="none" stroke-width="0" rx="10" opacity="0.15"/>
<rect x="2722" y="1553" width="137.4000000000001" height="40.299999999999955" fill="#fff" stroke="#e0e0e0" stroke-width="0.6" rx="10" />
<rect x="2823.9" y="1557.3" width="31.7" height="31.8" rx="7" fill="url(#blue)"/>
<path d="M2833.3 1570.5 L2839.8 1576.8 L2846.3 1570.5" fill="none" stroke="#fff" stroke-width="2.8" stroke-linecap="round" stroke-linejoin="round"/>
<text x="2726.2" y="1576.9" font-size="19" fill="#111" font-weight="normal" text-anchor="start" textLength="31" lengthAdjust="spacingAndGlyphs" >100</text>
<rect x="2556.4" y="1637.4" width="309.0" height="8" fill="#d9d9d9" stroke="none" stroke-width="0" rx="4.0" />
<rect x="2556.4" y="1637.4" width="127.5" height="8" fill="#1a82fb" stroke="none" stroke-width="0" rx="4.0" />
<circle cx="2683.9" cy="1642.4" r="20.6" fill="#000" stroke="none" stroke-width="0" opacity="0.12"/>
<circle cx="2683.9" cy="1641.4" r="20" fill="#fff" stroke="#d2d2d2" stroke-width="0.8" />
<rect x="2552.5" y="1683.0" width="27" height="27" fill="#d0d0d0" stroke="none" stroke-width="0" rx="6" opacity="0.5"/>
<rect x="2552.5" y="1682.2" width="27" height="27" fill="#ffffff" stroke="#cfcfcf" stroke-width="0.8" rx="6" />
<text x="2588.4" y="1703.3" font-size="19" fill="#222" font-weight="normal" text-anchor="start" textLength="153.4" lengthAdjust="spacing" >Keyboard control</text>
<path d="M2940 1740 A30 30 0 0 1 2925 1766 L2940 1766 Z" fill="#262626" stroke="none" stroke-width="0" />
</svg>
</body></html>
